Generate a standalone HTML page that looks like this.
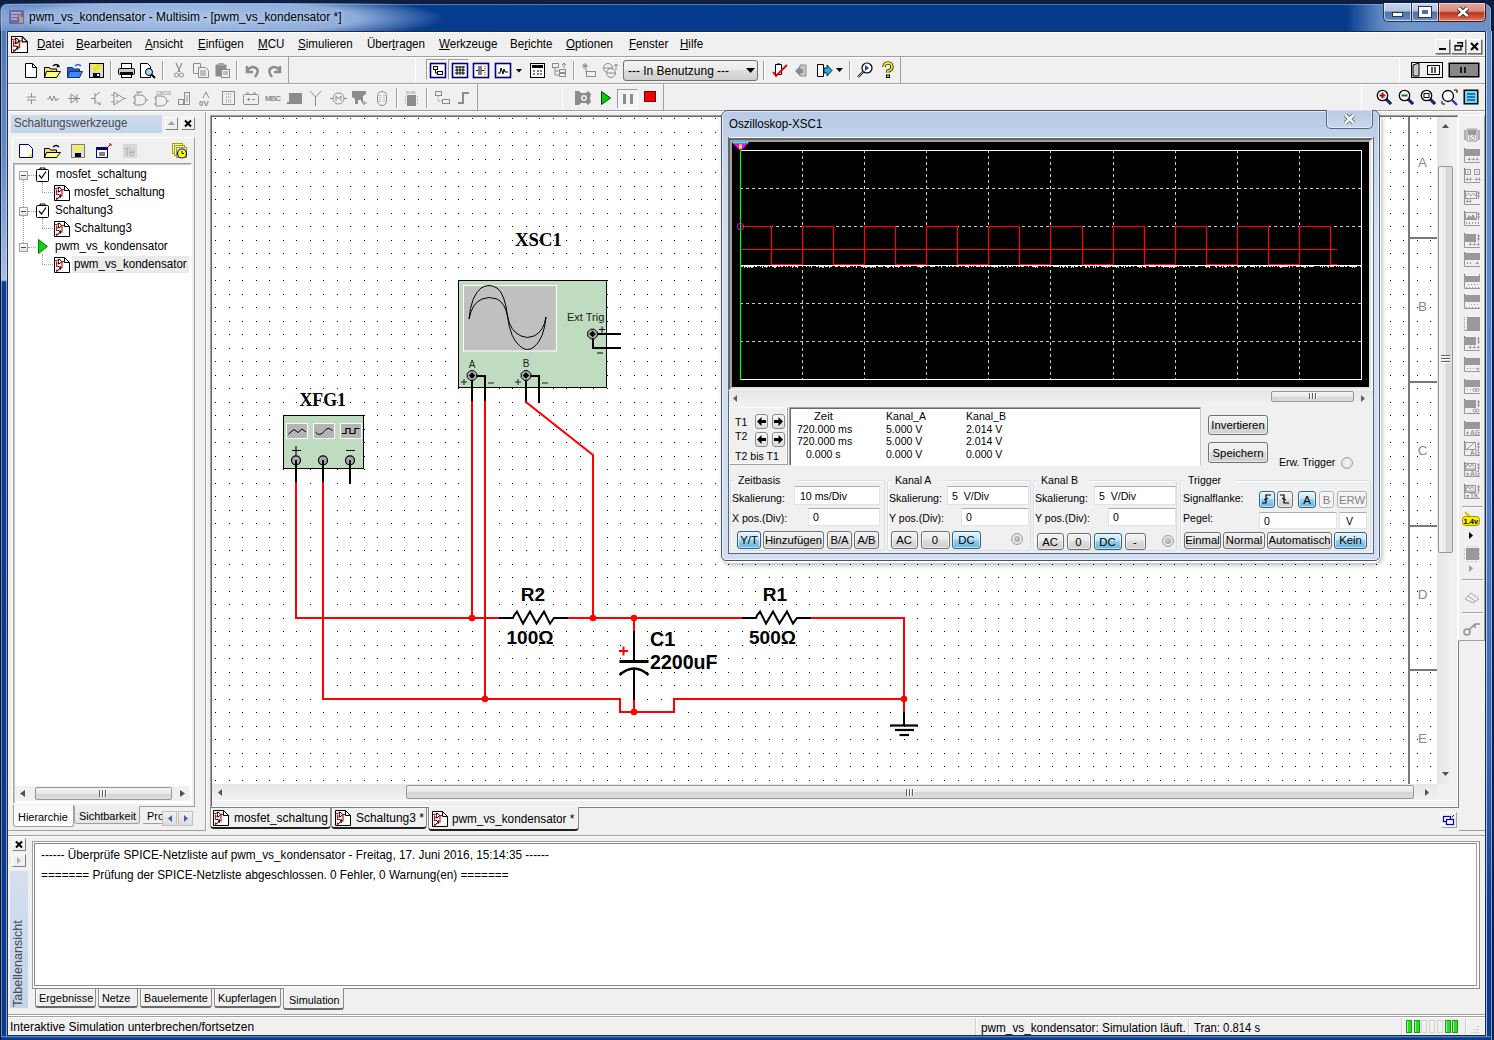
<!DOCTYPE html>
<html><head><meta charset="utf-8"><title>Multisim</title>
<style>
*{box-sizing:border-box;margin:0;padding:0}
html,body{width:1494px;height:1040px;overflow:hidden;background:#0c2250;font-family:"Liberation Sans",sans-serif;font-size:12px;color:#000}
.a{position:absolute}
svg.a{overflow:visible}
.t{position:absolute;white-space:pre;line-height:1}
.u{text-decoration:underline}
</style></head><body>
<div class="a" style="left:0px;top:0px;width:1494px;height:1040px;background:#0d1f45"></div>
<div class="a" style="left:0px;top:3px;width:1492px;height:1037px;border-radius:7px 7px 0 0;border:1px solid #0b1630;border-bottom:none;background:linear-gradient(90deg,#5f86c2 0px,#2d5aa2 40px,#063c8e 300px,#053a8b 900px,#053a8b 1345px,#5a84c0 1378px,#7096cc 1400px,#6a90c8 1492px)"></div>
<div class="a" style="left:1px;top:4px;width:1490px;height:1036px;border-radius:6px 6px 0 0;border:1px solid rgba(180,205,240,.45);border-bottom:none"></div>
<div class="a" style="left:0px;top:3px;width:620px;height:28px;border-radius:7px 0 0 0;background:radial-gradient(ellipse 250px 26px at 195px 15px,rgba(175,200,235,.95) 0%,rgba(165,192,232,.85) 65%,rgba(150,180,225,.0) 100%)"></div>
<div class="a" style="left:1px;top:31px;width:6px;height:1009px;background:linear-gradient(#5078b8 0px,#6088c4 120px,#a9c0e0 249px,#0c3c92 251px,#0a3a8c 1009px)"></div>
<div class="a" style="left:6px;top:31px;width:1px;height:1009px;background:rgba(210,225,245,.6)"></div>
<div class="a" style="left:1px;top:31px;width:1px;height:1009px;background:rgba(200,220,250,.5)"></div>
<div class="a" style="left:1485px;top:31px;width:7px;height:1009px;background:linear-gradient(#6a90c8 0%,#5580c4 45%,#3a68b4 70%,#0d3c90 88%,#0a3a8c 100%);border-left:1px solid #1b2d4d;box-shadow:inset 1px 0 0 rgba(200,220,250,.8),inset -1px 0 0 rgba(200,220,250,.6)"></div>
<svg class="a" style="left:9px;top:10px;" width="15" height="14" viewBox="0 0 15 14"><rect x="0" y="0" width="15" height="14" rx="1" fill="#6a6aa8"/><path d="M2 3H12M2 6H9M2 9H8" stroke="#f0e8d0" stroke-width="1.2"/><path d="M11 5V13M13 7V13" stroke="#f0c060" stroke-width="1.2"/></svg>
<div class="t" style="left:29px;top:11.00px;font-size:12.80px;color:#000;transform:scaleX(0.935);transform-origin:0 0;text-shadow:0 0 6px rgba(230,240,255,.9)">pwm_vs_kondensator - Multisim - [pwm_vs_kondensator *]</div>
<div class="a" style="left:1383px;top:3px;width:28px;height:19px;border:1px solid #27364f;border-top:none;border-right:none;border-radius:0 0 0 5px;background:linear-gradient(#c9d6ea 0%,#b0c3df 45%,#4e72a8 50%,#5f83ba 85%,#8aa8d4 100%);box-shadow:inset 0 0 0 1px rgba(255,255,255,.55)"></div>
<div class="a" style="left:1392px;top:12px;width:11px;height:5px;background:#fff;border:1px solid #2b3550"></div>
<div class="a" style="left:1411px;top:3px;width:27px;height:19px;border:1px solid #27364f;border-top:none;border-right:none;background:linear-gradient(#c9d6ea 0%,#b0c3df 45%,#4e72a8 50%,#5f83ba 85%,#8aa8d4 100%);box-shadow:inset 0 0 0 1px rgba(255,255,255,.55)"></div>
<div class="a" style="left:1419px;top:7px;width:12px;height:10px;border:3px solid #fff;outline:1px solid #2b3550;background:#4e72a8"></div>
<div class="a" style="left:1438px;top:3px;width:48px;height:19px;border:1px solid #4a1410;border-top:none;border-radius:0 0 5px 0;background:linear-gradient(#e3a9a0 0%,#d68a7c 45%,#c03018 55%,#d06048 85%,#e09080 100%);box-shadow:inset 0 0 0 1px rgba(255,255,255,.45)"></div>
<svg class="a" style="left:1456px;top:6px;" width="14" height="12" viewBox="0 0 14 12"><path d="M2.5 2L11.5 10M11.5 2L2.5 10" stroke="#3a2a2a" stroke-width="4.4"/><path d="M2.5 2L11.5 10M11.5 2L2.5 10" stroke="#fff" stroke-width="2.6"/></svg>
<div class="a" style="left:1px;top:1036px;width:1490px;height:4px;background:linear-gradient(#7a9cd0 0px,#3a68b0 1px,#0a3a8c 2px)"></div>
<div class="a" style="left:7px;top:31px;width:1479px;height:1005px;background:#f0f0f0;border:1px solid #1b2d4d"></div>
<div class="a" style="left:8px;top:32px;width:1477px;height:1px;background:#fff"></div>
<svg class="a" style="left:11px;top:36px;" width="17" height="17" viewBox="0 0 16 16"><path d="M0.5 0.5H10.5L15.5 5.5V15.5H0.5Z" fill="#fff" stroke="#000"/><path d="M10.5 0.5V5.5H15.5" fill="none" stroke="#000"/><path d="M1 3.5H3.5M2.5 4.5V9.5H4M10 4.5H8V11H6.5M2.5 12.5V15" fill="none" stroke="#f00000" stroke-width="1.2"/><path d="M4 2.2Q6.5 2 7.5 4.5Q6.5 7 4 7Q5.2 4.5 4 2.2Z" fill="#fff" stroke="#000" stroke-width="1"/><path d="M4 9L6.3 11L4 13.5M6.3 9.2V12.8M3 14.2L4.5 12.8" fill="none" stroke="#000" stroke-width="1"/></svg>
<div class="t" style="left:36.5px;top:38.00px;font-size:12.40px;color:#000;transform:scaleX(0.935);transform-origin:0 0;"><u>D</u>atei</div>
<div class="t" style="left:76px;top:38.00px;font-size:12.40px;color:#000;transform:scaleX(0.935);transform-origin:0 0;"><u>B</u>earbeiten</div>
<div class="t" style="left:145px;top:38.00px;font-size:12.40px;color:#000;transform:scaleX(0.935);transform-origin:0 0;"><u>A</u>nsicht</div>
<div class="t" style="left:198.3px;top:38.00px;font-size:12.40px;color:#000;transform:scaleX(0.935);transform-origin:0 0;"><u>E</u>infügen</div>
<div class="t" style="left:258.4px;top:38.00px;font-size:12.40px;color:#000;transform:scaleX(0.935);transform-origin:0 0;"><u>M</u>CU</div>
<div class="t" style="left:297.7px;top:38.00px;font-size:12.40px;color:#000;transform:scaleX(0.935);transform-origin:0 0;"><u>S</u>imulieren</div>
<div class="t" style="left:367.3px;top:38.00px;font-size:12.40px;color:#000;transform:scaleX(0.935);transform-origin:0 0;">Über<u>t</u>ragen</div>
<div class="t" style="left:438.9px;top:38.00px;font-size:12.40px;color:#000;transform:scaleX(0.935);transform-origin:0 0;"><u>W</u>erkzeuge</div>
<div class="t" style="left:510.4px;top:38.00px;font-size:12.40px;color:#000;transform:scaleX(0.935);transform-origin:0 0;">Be<u>r</u>ichte</div>
<div class="t" style="left:566px;top:38.00px;font-size:12.40px;color:#000;transform:scaleX(0.935);transform-origin:0 0;"><u>O</u>ptionen</div>
<div class="t" style="left:629px;top:38.00px;font-size:12.40px;color:#000;transform:scaleX(0.935);transform-origin:0 0;"><u>F</u>enster</div>
<div class="t" style="left:680.4px;top:38.00px;font-size:12.40px;color:#000;transform:scaleX(0.935);transform-origin:0 0;"><u>H</u>ilfe</div>
<div class="a" style="left:1435px;top:39px;width:15px;height:15px;background:#f0f0f0;border:1px solid;border-color:#fff #707070 #707070 #fff;box-shadow:1px 1px 0 #a0a0a0"></div>
<div class="a" style="left:1451px;top:39px;width:15px;height:15px;background:#f0f0f0;border:1px solid;border-color:#fff #707070 #707070 #fff;box-shadow:1px 1px 0 #a0a0a0"></div>
<div class="a" style="left:1467px;top:39px;width:15px;height:15px;background:#f0f0f0;border:1px solid;border-color:#fff #707070 #707070 #fff;box-shadow:1px 1px 0 #a0a0a0"></div>
<div class="a" style="left:1439px;top:48px;width:7px;height:2px;background:#000"></div>
<svg class="a" style="left:1454px;top:41px;" width="10" height="10" viewBox="0 0 10 10"><path d="M3.5 1.5H8.5V5.5H6.5" fill="none" stroke="#000" stroke-width="1.2"/><rect x="3" y="1" width="6" height="1.5" fill="#000"/><rect x="1" y="4.5" width="6" height="4.5" fill="none" stroke="#000" stroke-width="1.2"/><rect x="1" y="4" width="6" height="1.5" fill="#000"/></svg>
<svg class="a" style="left:1470px;top:42px;" width="9" height="9" viewBox="0 0 9 9"><path d="M1 1L8 8M8 1L1 8" stroke="#000" stroke-width="2"/></svg>
<div class="a" style="left:8px;top:56px;width:1477px;height:1px;background:#a0a0a0"></div>
<div class="a" style="left:8px;top:57px;width:1477px;height:1px;background:#fff"></div>
<div class="a" style="left:8px;top:57px;width:281px;height:27px;border-right:1px solid #a0a0a0;border-bottom:1px solid #a0a0a0"></div>
<div class="a" style="left:415px;top:57px;width:486px;height:27px;border-left:1px solid #fff;border-right:1px solid #a0a0a0;border-bottom:1px solid #a0a0a0"></div>
<div class="a" style="left:1399px;top:57px;width:86px;height:27px;border-left:1px solid #fff;border-bottom:1px solid #a0a0a0"></div>
<div class="a" style="left:8px;top:83px;width:1477px;height:1px;background:#a0a0a0"></div>
<div class="a" style="left:8px;top:84px;width:1477px;height:1px;background:#fff"></div>
<div class="a" style="left:8px;top:84px;width:470px;height:27px;border-right:1px solid #a0a0a0"></div>
<div class="a" style="left:562px;top:84px;width:102px;height:27px;border-left:1px solid #fff;border-right:1px solid #a0a0a0"></div>
<div class="a" style="left:1361px;top:84px;width:124px;height:27px;border-left:1px solid #fff"></div>
<div class="a" style="left:8px;top:110px;width:1477px;height:1px;background:#a0a0a0"></div>
<div class="a" style="left:8px;top:111px;width:1477px;height:1px;background:#fff"></div>
<svg class="a" style="left:25px;top:63px;" width="12" height="15" viewBox="0 0 12 15"><path d="M0.5 0.5H7.5L11.5 4.5V14.5H0.5Z" fill="#fff" stroke="#000"/><path d="M7.5 0.5V4.5H11.5" fill="none" stroke="#000"/></svg>
<svg class="a" style="left:44px;top:63px;" width="17" height="15" viewBox="0 0 17 15"><path d="M0.5 4.5H5.5L6.5 6H12.5V14.5H0.5Z" fill="#f0e060" stroke="#000"/><path d="M2.5 8.5H16.5L12.5 14.5H0.5Z" fill="#ffff80" stroke="#000"/><path d="M9 3 Q12 0 15 3" fill="none" stroke="#000" stroke-width="1.5"/><path d="M13.5 1L16 4L12.5 4.5Z" fill="#000"/></svg>
<svg class="a" style="left:67px;top:63px;" width="16" height="15" viewBox="0 0 16 15"><path d="M0.5 4.5H5.5L6.5 6H12.5V14.5H0.5Z" fill="#2060d0" stroke="#103080"/><path d="M2.5 8.5H15.5L12.5 14.5H0.5Z" fill="#3a8af0" stroke="#103080"/><path d="M8 3 Q11 0 14 3" fill="none" stroke="#2060d0" stroke-width="1.5"/></svg>
<svg class="a" style="left:89px;top:63px;" width="15" height="15" viewBox="0 0 15 15"><rect x="0.5" y="0.5" width="14" height="14" fill="#d8d8d8" stroke="#000"/><rect x="3" y="1" width="9" height="7" fill="#f0f040"/><path d="M4 7L10 1M6 8L12 2" stroke="#c8c820"/><rect x="4" y="10" width="7" height="4" fill="#000"/><rect x="8" y="11" width="2" height="2" fill="#fff"/></svg>
<div class="a" style="left:110px;top:61px;width:1px;height:19px;background:#a0a0a0;box-shadow:1px 0 0 #fff"></div>
<svg class="a" style="left:118px;top:63px;" width="17" height="15" viewBox="0 0 17 15"><rect x="3.5" y="0.5" width="10" height="5" fill="#fff" stroke="#000"/><rect x="0.5" y="5.5" width="16" height="6" rx="1" fill="#c8c8c8" stroke="#000"/><rect x="2" y="9" width="13" height="2" fill="#000"/><rect x="3.5" y="11.5" width="10" height="3" fill="#fff" stroke="#000"/></svg>
<svg class="a" style="left:140px;top:63px;" width="16" height="16" viewBox="0 0 16 16"><path d="M0.5 0.5H7.5L10.5 3.5V14.5H0.5Z" fill="#fff" stroke="#000"/><circle cx="9" cy="9" r="3.5" fill="#a0e0f0" stroke="#000"/><path d="M11.5 11.5L15 15" stroke="#000" stroke-width="2"/></svg>
<div class="a" style="left:162px;top:61px;width:1px;height:19px;background:#a0a0a0;box-shadow:1px 0 0 #fff"></div>
<svg class="a" style="left:174px;top:63px;" width="10" height="15" viewBox="0 0 10 15"><path d="M2 0L6 9M8 0L4 9" stroke="#8c8c8c" stroke-width="1.2"/><circle cx="2.5" cy="12" r="2" fill="none" stroke="#8c8c8c"/><circle cx="7.5" cy="12" r="2" fill="none" stroke="#8c8c8c"/></svg>
<svg class="a" style="left:193px;top:63px;" width="16" height="15" viewBox="0 0 16 15"><path d="M0.5 0.5H7.5V10.5H0.5Z" fill="#f0f0f0" stroke="#8c8c8c"/><path d="M5.5 4.5H12.5L15.5 7.5V14.5H5.5Z" fill="#f0f0f0" stroke="#8c8c8c"/><path d="M7 8H13M7 10H13M7 12H13" stroke="#8c8c8c"/></svg>
<svg class="a" style="left:215px;top:63px;" width="15" height="15" viewBox="0 0 15 15"><rect x="0.5" y="1.5" width="11" height="12" rx="1" fill="#8c8c8c"/><rect x="3" y="0" width="6" height="3" fill="#a8a8a8"/><rect x="6.5" y="6.5" width="8" height="8" fill="#f0f0f0" stroke="#8c8c8c"/><path d="M8 9H13M8 11H13" stroke="#8c8c8c"/></svg>
<div class="a" style="left:236px;top:61px;width:1px;height:19px;background:#a0a0a0;box-shadow:1px 0 0 #fff"></div>
<svg class="a" style="left:244px;top:63px;" width="16" height="15" viewBox="0 0 16 15"><path d="M3 3 L3 9 L9 9" fill="none" stroke="#8c8c8c" stroke-width="2.5"/><path d="M3 8 Q8 1 13 6 Q15 9 11 14" fill="none" stroke="#8c8c8c" stroke-width="2.5"/></svg>
<svg class="a" style="left:267px;top:63px;" width="16" height="15" viewBox="0 0 16 15"><path d="M13 3 L13 9 L7 9" fill="none" stroke="#8c8c8c" stroke-width="2.5"/><path d="M13 8 Q8 1 3 6 Q1 9 5 14" fill="none" stroke="#8c8c8c" stroke-width="2.5"/></svg>
<div class="a" style="left:426px;top:59px;width:21px;height:21px;border:1px solid;border-color:#a0a0a0 #fff #fff #a0a0a0;background:#f4f4f4"></div>
<div class="a" style="left:448px;top:59px;width:21px;height:21px;border:1px solid;border-color:#a0a0a0 #fff #fff #a0a0a0;background:#f4f4f4"></div>
<svg class="a" style="left:430px;top:63px;" width="16" height="15" viewBox="0 0 16 15"><rect x="0.5" y="0.5" width="15" height="14" fill="#fff" stroke="#000080" stroke-width="1.6"/><rect x="3.5" y="3.5" width="4" height="3" fill="none" stroke="#000"/><rect x="7.5" y="8.5" width="5" height="3" fill="none" stroke="#000"/><path d="M5.5 6.5V10H7.5" stroke="#000" fill="none"/></svg>
<svg class="a" style="left:452px;top:63px;" width="16" height="15" viewBox="0 0 16 15"><rect x="0.5" y="0.5" width="15" height="14" fill="#fff" stroke="#000080" stroke-width="1.6"/><path d="M3 4H13M3 7H13M3 10H13M5 3V12M8 3V12M11 3V12" stroke="#000"/></svg>
<svg class="a" style="left:473px;top:63px;" width="16" height="15" viewBox="0 0 16 15"><rect x="0.5" y="0.5" width="15" height="14" fill="#fff" stroke="#000080" stroke-width="1.6"/><path d="M3 7.5H5M6 3V12M8 3V12M9 7.5H11" stroke="#000"/><path d="M12 3V12" stroke="#e00000" stroke-dasharray="1 1"/></svg>
<svg class="a" style="left:495px;top:63px;" width="16" height="15" viewBox="0 0 16 15"><rect x="0.5" y="0.5" width="15" height="14" fill="#fff" stroke="#000080" stroke-width="1.6"/><path d="M3 10L5 10L6 5L8 11L9 6L10 9L13 9" stroke="#000" fill="none"/></svg>
<svg class="a" style="left:516px;top:69px;" width="6" height="4" viewBox="0 0 6 4"><path d="M0 0H6L3 3.5Z" fill="#000"/></svg>
<svg class="a" style="left:530px;top:63px;" width="15" height="15" viewBox="0 0 15 15"><rect x="0.5" y="0.5" width="14" height="14" fill="#fff" stroke="#000"/><rect x="2" y="2" width="11" height="3" fill="#000"/><path d="M3 8H5M7 8H9M10 8H12M3 11H5M7 11H9M10 11H12" stroke="#000"/></svg>
<svg class="a" style="left:552px;top:63px;" width="15" height="15" viewBox="0 0 15 15"><rect x="0.5" y="0.5" width="6" height="4" fill="none" stroke="#8c8c8c"/><path d="M3 5V12H7M3 8H7" stroke="#8c8c8c" fill="none"/><rect x="7.5" y="6.5" width="6" height="3" fill="none" stroke="#8c8c8c"/><rect x="7.5" y="10.5" width="6" height="3" fill="none" stroke="#8c8c8c"/><path d="M12 0V5M10 2L12 0L14 2" stroke="#8c8c8c" fill="none"/></svg>
<div class="a" style="left:573px;top:61px;width:1px;height:19px;background:#a0a0a0;box-shadow:1px 0 0 #fff"></div>
<svg class="a" style="left:581px;top:63px;" width="16" height="15" viewBox="0 0 16 15"><path d="M1 3L7 3M4 0L4 6M2 1L6 5M6 1L2 5" stroke="#8c8c8c"/><rect x="5.5" y="8.5" width="9" height="5" fill="none" stroke="#8c8c8c"/><path d="M5 6V9" stroke="#8c8c8c"/></svg>
<svg class="a" style="left:603px;top:63px;" width="16" height="15" viewBox="0 0 16 15"><circle cx="5" cy="5" r="4.5" fill="none" stroke="#8c8c8c"/><circle cx="8" cy="10" r="4.5" fill="#f0f0f0" stroke="#8c8c8c"/><path d="M1 5H9M4 10H12" stroke="#8c8c8c"/><path d="M13 1V7M11 3L13 1L15 3" stroke="#8c8c8c" fill="none"/></svg>
<div class="a" style="left:623px;top:60px;width:135px;height:21px;border:1px solid #707070;border-radius:3px;background:linear-gradient(#f2f2f2 0%,#ebebeb 45%,#dddddd 50%,#cfcfcf 100%)"></div>
<div class="t" style="left:627.5px;top:65.00px;font-size:12.80px;color:#000;transform:scaleX(0.935);transform-origin:0 0;">--- In Benutzung ---</div>
<svg class="a" style="left:746px;top:68px;" width="9" height="5" viewBox="0 0 9 5"><path d="M0 0H9L4.5 5Z" fill="#000"/></svg>
<div class="a" style="left:763px;top:61px;width:1px;height:19px;background:#a0a0a0;box-shadow:1px 0 0 #fff"></div>
<svg class="a" style="left:772px;top:63px;" width="16" height="16" viewBox="0 0 16 16"><path d="M3.5 1.5H9.5V11.5H3.5Z" fill="#fff" stroke="#000"/><path d="M5 2V1H8V2" stroke="#000" fill="none"/><path d="M1 9L4 13L15 2" stroke="#e00000" stroke-width="1.8" fill="none"/></svg>
<svg class="a" style="left:795px;top:64px;" width="12" height="13" viewBox="0 0 12 13"><path d="M5 1H11V12H5Z" fill="#c8c8c8" stroke="#8c8c8c"/><path d="M0 7L5 2V5H8V9H5V12Z" fill="#8c8c8c"/></svg>
<svg class="a" style="left:817px;top:63px;" width="15" height="15" viewBox="0 0 15 15"><path d="M0.5 1.5H6.5V13.5H0.5Z" fill="#fff" stroke="#000"/><path d="M7 5H10V2L15 7.5L10 13V10H7Z" fill="#20b0e0" stroke="#000" stroke-width=".8"/></svg>
<svg class="a" style="left:836px;top:68px;" width="7" height="4" viewBox="0 0 7 4"><path d="M0 0H7L3.5 4Z" fill="#000"/></svg>
<div class="a" style="left:849px;top:61px;width:1px;height:19px;background:#a0a0a0;box-shadow:1px 0 0 #fff"></div>
<svg class="a" style="left:857px;top:62px;" width="16" height="17" viewBox="0 0 16 17"><circle cx="10" cy="6" r="5" fill="#fff" stroke="#000" stroke-width="1.2"/><path d="M8 3L12 6L8 9" fill="#2040c0"/><path d="M6.5 9.5L1 15" stroke="#000" stroke-width="2.2"/><path d="M6.5 9.5L1 15" stroke="#fff" stroke-width=".8"/></svg>
<svg class="a" style="left:882px;top:62px;" width="12" height="17" viewBox="0 0 12 17"><path d="M2 5 Q2 1 6 1 Q10 1 10 5 Q10 8 6 9 V11" fill="none" stroke="#000" stroke-width="3.2"/><path d="M2 5 Q2 1 6 1 Q10 1 10 5 Q10 8 6 9 V11" fill="none" stroke="#f0f000" stroke-width="1.8"/><rect x="4" y="12.5" width="4" height="3.5" fill="#000"/><rect x="5" y="13.5" width="2" height="1.5" fill="#f0f000"/></svg>
<svg class="a" style="left:26px;top:91px;" width="11" height="15" viewBox="0 0 11 15"><path d="M5.5 2V6M1 6H10M1 9H10M5.5 9V13" stroke="#8c8c8c" fill="none"/></svg>
<svg class="a" style="left:47px;top:91px;" width="12" height="15" viewBox="0 0 12 15"><path d="M0 8H2L3 5L5 10L7 5L9 10L10 8H12" stroke="#8c8c8c" fill="none"/></svg>
<svg class="a" style="left:68px;top:91px;" width="12" height="15" viewBox="0 0 12 15"><path d="M0 7.5H12M3 3V12M3 3L9 7.5L3 12M9 3V12" stroke="#8c8c8c" fill="none"/></svg>
<svg class="a" style="left:91px;top:91px;" width="12" height="15" viewBox="0 0 12 15"><path d="M4 2V13M0 7.5H4M4 5L9 1M4 10L9 14M7 12L9 14L9 11" stroke="#8c8c8c" fill="none"/></svg>
<svg class="a" style="left:111px;top:91px;" width="15" height="15" viewBox="0 0 15 15"><path d="M3 1V14L13 7.5Z" stroke="#8c8c8c" fill="none"/><path d="M0 4H3M0 11H3M13 7.5H15M5 5H7M6 4V6M5 10H7" stroke="#8c8c8c" fill="none"/></svg>
<svg class="a" style="left:133px;top:91px;" width="15" height="15" viewBox="0 0 15 15"><path d="M2 4H7Q12 4 13 9Q12 14 7 14H2Z" stroke="#8c8c8c" fill="none"/><path d="M0 6H2M0 12H2M13 9H15M3 1H9M5 1V3" stroke="#8c8c8c" fill="none"/></svg>
<svg class="a" style="left:154px;top:91px;" width="17" height="15" viewBox="0 0 17 15"><path d="M2 5H7Q12 5 13 10Q12 15 7 15H2Z" stroke="#8c8c8c" fill="none"/><path d="M0 7H2M0 13H2M13 10H15" stroke="#8c8c8c" fill="none"/><text x="2" y="4" font-size="5" fill="#8c8c8c" font-family="Liberation Sans">CMOS</text></svg>
<svg class="a" style="left:178px;top:91px;" width="13" height="15" viewBox="0 0 13 15"><rect x="6.5" y="1.5" width="5" height="12" stroke="#8c8c8c" fill="none"/><rect x="0.5" y="8.5" width="5" height="5" stroke="#8c8c8c" fill="none"/><path d="M9 4V11" stroke="#8c8c8c" fill="none"/></svg>
<svg class="a" style="left:199px;top:91px;" width="16" height="15" viewBox="0 0 16 15"><path d="M4 7L7 1L10 7" stroke="#8c8c8c" fill="none"/><text x="0" y="15" font-size="8" font-weight="bold" fill="#8c8c8c" font-family="Liberation Sans">0V</text></svg>
<svg class="a" style="left:222px;top:91px;" width="13" height="14" viewBox="0 0 13 14"><rect x="0.5" y="0.5" width="12" height="13" stroke="#8c8c8c" fill="none"/><path d="M4 3H9M4 6H9M4 9H9M4 11H9" stroke="#8c8c8c" stroke-dasharray="1 1"/></svg>
<svg class="a" style="left:243px;top:92px;" width="16" height="13" viewBox="0 0 16 13"><rect x="0.5" y="2.5" width="15" height="10" rx="1" stroke="#8c8c8c" fill="none"/><path d="M3 1H6M10 1H13M4 7.5H7M5.5 6V9M9 7.5H12" stroke="#8c8c8c" fill="none"/></svg>
<svg class="a" style="left:265px;top:94px;" width="16" height="8" viewBox="0 0 16 8"><text x="0" y="7" font-size="7.5" font-weight="bold" fill="#8c8c8c" font-family="Liberation Sans" textLength="16">MISC</text></svg>
<svg class="a" style="left:287px;top:93px;" width="15" height="12" viewBox="0 0 15 12"><rect x="2" y="0" width="13" height="9" fill="#8c8c8c"/><path d="M0 10H15" stroke="#8c8c8c" stroke-width="2"/></svg>
<svg class="a" style="left:310px;top:91px;" width="11" height="15" viewBox="0 0 11 15"><path d="M5.5 5V15M0 0L5.5 6L11 0" stroke="#8c8c8c" fill="none"/></svg>
<svg class="a" style="left:330px;top:91px;" width="17" height="15" viewBox="0 0 17 15"><circle cx="8.5" cy="7.5" r="5.5" stroke="#8c8c8c" fill="none"/><path d="M0 7.5H3M14 7.5H17M6 10V5L8.5 8L11 5V10" stroke="#8c8c8c" fill="none"/></svg>
<svg class="a" style="left:352px;top:91px;" width="16" height="15" viewBox="0 0 16 15"><path d="M0 0H14V3L11 5V11H9V9H6V13H3V8L0 6Z" fill="#8c8c8c"/><path d="M10 12H15M12 10V14" stroke="#8c8c8c" fill="none"/></svg>
<svg class="a" style="left:377px;top:91px;" width="10" height="15" viewBox="0 0 10 15"><rect x="0.5" y="0.5" width="9" height="14" rx="4.5" stroke="#8c8c8c" fill="none"/><path d="M3 4V11M7 4V11" stroke="#8c8c8c" stroke-dasharray="1 1"/></svg>
<div class="a" style="left:396px;top:88px;width:1px;height:20px;background:#a0a0a0;box-shadow:1px 0 0 #fff"></div>
<svg class="a" style="left:405px;top:91px;" width="13" height="15" viewBox="0 0 13 15"><rect x="2" y="4" width="9" height="11" fill="#8c8c8c"/><path d="M0 6H13M0 9H13M0 12H13" stroke="#8c8c8c" stroke-dasharray="1 1"/><text x="1" y="3" font-size="4" fill="#8c8c8c">ROM</text></svg>
<div class="a" style="left:426px;top:88px;width:1px;height:20px;background:#a0a0a0;box-shadow:1px 0 0 #fff"></div>
<svg class="a" style="left:435px;top:91px;" width="15" height="14" viewBox="0 0 15 14"><rect x="0.5" y="0.5" width="6" height="4" stroke="#8c8c8c" fill="none"/><rect x="7.5" y="8.5" width="7" height="4" stroke="#8c8c8c" fill="none"/><path d="M3 5V10H7" stroke="#8c8c8c" stroke-dasharray="1 1" fill="none"/></svg>
<svg class="a" style="left:458px;top:91px;" width="12" height="14" viewBox="0 0 12 14"><path d="M0 12H5V2H11" stroke="#8c8c8c" stroke-width="2" fill="none"/></svg>
<svg class="a" style="left:575px;top:90px;" width="17" height="16" viewBox="0 0 17 16"><path d="M0 1H4L6 3 H11L13 1L16 4L15 8L16 12L13 15L11 13H6L4 15H0Z" fill="#8c8c8c"/><circle cx="9" cy="8" r="3" fill="#f0f0f0"/><circle cx="9" cy="8" r="1.5" fill="#8c8c8c"/></svg>
<svg class="a" style="left:601px;top:91px;" width="10" height="14" viewBox="0 0 10 14"><path d="M0.5 0.5L9.5 7L0.5 13.5Z" fill="#00d000" stroke="#004000"/></svg>
<div class="a" style="left:617px;top:89px;width:21px;height:20px;border:1px solid;border-color:#a0a0a0 #fff #fff #a0a0a0;background:#f4f4f4"></div>
<div class="a" style="left:623px;top:94px;width:3px;height:10px;background:#8c8c8c"></div>
<div class="a" style="left:630px;top:94px;width:3px;height:10px;background:#8c8c8c"></div>
<div class="a" style="left:644px;top:91px;width:12px;height:11px;background:#f00000;border:1px solid #800000"></div>
<svg class="a" style="left:1376px;top:89px;" width="16" height="16" viewBox="0 0 16 16"><circle cx="6.5" cy="6.5" r="5.2" fill="#fff" stroke="#000" stroke-width="1.3"/><path d="M3.5 6.5H9.5M6.5 3.5V9.5" stroke="#c00000" stroke-width="2"/><path d="M10 10L15 15" stroke="#000" stroke-width="3"/><path d="M10.5 10.5L14.5 14.5" stroke="#2030c0" stroke-width="1.6"/></svg>
<svg class="a" style="left:1398px;top:89px;" width="16" height="16" viewBox="0 0 16 16"><circle cx="6.5" cy="6.5" r="5.2" fill="#fff" stroke="#000" stroke-width="1.3"/><path d="M3.5 6.5H9.5" stroke="#008000" stroke-width="2"/><path d="M10 10L15 15" stroke="#000" stroke-width="3"/><path d="M10.5 10.5L14.5 14.5" stroke="#2030c0" stroke-width="1.6"/></svg>
<svg class="a" style="left:1420px;top:89px;" width="16" height="16" viewBox="0 0 16 16"><circle cx="6.5" cy="6.5" r="5.2" fill="#fff" stroke="#000" stroke-width="1.3"/><rect x="4" y="4.5" width="5" height="4" fill="none" stroke="#000"/><path d="M10 10L15 15" stroke="#000" stroke-width="3"/><path d="M10.5 10.5L14.5 14.5" stroke="#2030c0" stroke-width="1.6"/></svg>
<svg class="a" style="left:1441px;top:89px;" width="17" height="16" viewBox="0 0 17 16"><circle cx="7" cy="7" r="5.5" fill="#fff" stroke="#000" stroke-width="1.3"/><path d="M1 12V15H4M13 1H16V4" stroke="#000" fill="none"/><path d="M11 11L16 16" stroke="#2030c0" stroke-width="2.2"/></svg>
<svg class="a" style="left:1463px;top:89px;" width="16" height="16" viewBox="0 0 16 16"><rect x="0.5" y="0.5" width="15" height="15" fill="#000"/><rect x="2" y="2" width="12" height="12" fill="#60e0f0"/><path d="M4 5H12M4 8H12M4 11H12" stroke="#000080"/></svg>
<svg class="a" style="left:1411px;top:62px;" width="32" height="16" viewBox="0 0 32 16"><rect x="0.5" y="0.5" width="31" height="15" fill="#f0f0f0" stroke="#000"/><path d="M2 14V3L8 1V14Z" fill="#c8c8c8" stroke="#000"/><rect x="16.5" y="3.5" width="12" height="9" fill="#fff" stroke="#000"/><path d="M21 5V11M24 5V11" stroke="#000" stroke-width="1.3"/></svg>
<svg class="a" style="left:1448px;top:62px;" width="32" height="16" viewBox="0 0 32 16"><rect x="0.5" y="0.5" width="31" height="15" fill="#000"/><rect x="2" y="2" width="28" height="12" fill="#888"/><path d="M13 5V11M17 5V11" stroke="#000" stroke-width="1.6"/></svg>
<div class="a" style="left:11px;top:115px;width:151px;height:18px;background:linear-gradient(#cfdcee,#c2d4ea)"></div>
<div class="t" style="left:14px;top:117.00px;font-size:12.40px;color:#4a4a4a;transform:scaleX(0.935);transform-origin:0 0;">Schaltungswerkzeuge</div>
<div class="a" style="left:165px;top:117px;width:13px;height:13px;background:#f0f0f0;border:1px solid;border-color:#fff #808080 #808080 #fff"></div>
<svg class="a" style="left:168px;top:121px;" width="7" height="4" viewBox="0 0 7 4"><path d="M0 4L3.5 0L7 4Z" fill="#a0a0a0"/></svg>
<div class="a" style="left:181px;top:117px;width:14px;height:13px;background:#f0f0f0;border:1px solid;border-color:#fff #808080 #808080 #fff"></div>
<svg class="a" style="left:184px;top:120px;" width="8" height="7" viewBox="0 0 8 7"><path d="M1 0.5L7 6.5M7 0.5L1 6.5" stroke="#000" stroke-width="2"/></svg>
<div class="a" style="left:12px;top:137px;width:183px;height:670px;border:1px solid;border-color:#fff #a0a0a0 #a0a0a0 #fff"></div>
<div class="a" style="left:13px;top:137px;width:181px;height:1px;background:#fff"></div>
<svg class="a" style="left:19px;top:144px;" width="14" height="14" viewBox="0 0 14 14"><path d="M0.5 0.5H9.5L13.5 4.5V13.5H0.5Z" fill="#fff" stroke="#000080"/><path d="M9 13L13 9V13Z" fill="#f0f000"/></svg>
<svg class="a" style="left:44px;top:144px;" width="17" height="14" viewBox="0 0 17 14"><path d="M0.5 4.5H5.5L6.5 6H12.5V13.5H0.5Z" fill="#f0e060" stroke="#000"/><path d="M2.5 8.5H16.5L12.5 13.5H0.5Z" fill="#ffff80" stroke="#000"/><path d="M9 3 Q12 0 15 3" fill="none" stroke="#000" stroke-width="1.4"/></svg>
<svg class="a" style="left:71px;top:144px;" width="14" height="14" viewBox="0 0 14 14"><rect x="0.5" y="0.5" width="13" height="13" fill="#e0e0e0" stroke="#808080"/><rect x="2" y="1" width="10" height="6" fill="#f0f060"/><rect x="4" y="9" width="6" height="4" fill="#000"/></svg>
<svg class="a" style="left:96px;top:143px;" width="16" height="15" viewBox="0 0 16 15"><rect x="0.5" y="4.5" width="11" height="10" fill="#fff" stroke="#000080"/><rect x="1" y="5" width="10" height="2" fill="#000080"/><path d="M3 10H9M3 12H9" stroke="#000"/><path d="M12 4L15 1M13 1H15V3" stroke="#c00000" fill="none"/></svg>
<svg class="a" style="left:123px;top:144px;" width="14" height="14" viewBox="0 0 14 14"><rect x="0" y="0" width="14" height="14" fill="#d8d8d8"/><text x="1" y="12" font-size="10" fill="#a8a8a8" font-family="Liberation Sans">Te</text></svg>
<svg class="a" style="left:172px;top:143px;" width="16" height="16" viewBox="0 0 16 16"><rect x="0.5" y="0.5" width="10" height="10" fill="#f0f0c0" stroke="#a0a000"/><rect x="2.5" y="2.5" width="10" height="10" fill="#f0f0c0" stroke="#a0a000"/><rect x="4.5" y="4.5" width="10" height="10" fill="#f0f0c0" stroke="#a0a000"/><circle cx="10" cy="10.5" r="4.5" fill="#ffff00" stroke="#0000c0" stroke-width="1.2"/><path d="M10 8V10.5H12" stroke="#000" fill="none"/></svg>
<div class="a" style="left:13px;top:163px;width:179px;height:641px;background:#fff;border:1px solid;border-color:#a0a0a0 #fff #fff #a0a0a0;box-shadow:inset 1px 1px 0 #c8c8c8"></div>
<div class="a" style="left:23px;top:180px;width:1px;height:67px;border-left:1px dotted #a0a0a0"></div>
<div class="a" style="left:28px;top:175px;width:8px;height:1px;border-top:1px dotted #a0a0a0"></div>
<div class="a" style="left:28px;top:211px;width:8px;height:1px;border-top:1px dotted #a0a0a0"></div>
<div class="a" style="left:28px;top:247px;width:8px;height:1px;border-top:1px dotted #a0a0a0"></div>
<div class="a" style="left:42px;top:182px;width:1px;height:10px;border-left:1px dotted #a0a0a0"></div>
<div class="a" style="left:42px;top:192px;width:11px;height:1px;border-top:1px dotted #a0a0a0"></div>
<div class="a" style="left:42px;top:218px;width:1px;height:10px;border-left:1px dotted #a0a0a0"></div>
<div class="a" style="left:42px;top:228px;width:11px;height:1px;border-top:1px dotted #a0a0a0"></div>
<div class="a" style="left:42px;top:254px;width:1px;height:10px;border-left:1px dotted #a0a0a0"></div>
<div class="a" style="left:42px;top:264px;width:11px;height:1px;border-top:1px dotted #a0a0a0"></div>
<div class="a" style="left:19px;top:171px;width:9px;height:9px;border:1px solid #a0a0a0;background:linear-gradient(#fff,#e0e0e0)"></div>
<div class="a" style="left:21px;top:175px;width:5px;height:1px;background:#3050a0"></div>
<div class="a" style="left:19px;top:207px;width:9px;height:9px;border:1px solid #a0a0a0;background:linear-gradient(#fff,#e0e0e0)"></div>
<div class="a" style="left:21px;top:211px;width:5px;height:1px;background:#3050a0"></div>
<div class="a" style="left:19px;top:243px;width:9px;height:9px;border:1px solid #a0a0a0;background:linear-gradient(#fff,#e0e0e0)"></div>
<div class="a" style="left:21px;top:247px;width:5px;height:1px;background:#3050a0"></div>
<svg class="a" style="left:36px;top:167px;" width="13" height="15" viewBox="0 0 13 15"><rect x="0.5" y="2.5" width="12" height="12" rx="1" fill="#fff" stroke="#000"/><path d="M4 2.5V1H9V2.5" fill="none" stroke="#000"/><path d="M3 8L5.5 11L10 4.5" fill="none" stroke="#000" stroke-width="1.2"/></svg>
<svg class="a" style="left:36px;top:203px;" width="13" height="15" viewBox="0 0 13 15"><rect x="0.5" y="2.5" width="12" height="12" rx="1" fill="#fff" stroke="#000"/><path d="M4 2.5V1H9V2.5" fill="none" stroke="#000"/><path d="M3 8L5.5 11L10 4.5" fill="none" stroke="#000" stroke-width="1.2"/></svg>
<svg class="a" style="left:38px;top:239px;" width="10" height="15" viewBox="0 0 10 15"><path d="M0.5 0.5L9.5 7.5L0.5 14.5Z" fill="#10d010" stroke="#008000"/></svg>
<svg class="a" style="left:54px;top:185px;" width="16" height="16" viewBox="0 0 16 16"><path d="M0.5 0.5H10.5L15.5 5.5V15.5H0.5Z" fill="#fff" stroke="#000"/><path d="M10.5 0.5V5.5H15.5" fill="none" stroke="#000"/><path d="M1 3.5H3.5M2.5 4.5V9.5H4M10 4.5H8V11H6.5M2.5 12.5V15" fill="none" stroke="#f00000" stroke-width="1.2"/><path d="M4 2.2Q6.5 2 7.5 4.5Q6.5 7 4 7Q5.2 4.5 4 2.2Z" fill="#fff" stroke="#000" stroke-width="1"/><path d="M4 9L6.3 11L4 13.5M6.3 9.2V12.8M3 14.2L4.5 12.8" fill="none" stroke="#000" stroke-width="1"/></svg>
<svg class="a" style="left:54px;top:221px;" width="16" height="16" viewBox="0 0 16 16"><path d="M0.5 0.5H10.5L15.5 5.5V15.5H0.5Z" fill="#fff" stroke="#000"/><path d="M10.5 0.5V5.5H15.5" fill="none" stroke="#000"/><path d="M1 3.5H3.5M2.5 4.5V9.5H4M10 4.5H8V11H6.5M2.5 12.5V15" fill="none" stroke="#f00000" stroke-width="1.2"/><path d="M4 2.2Q6.5 2 7.5 4.5Q6.5 7 4 7Q5.2 4.5 4 2.2Z" fill="#fff" stroke="#000" stroke-width="1"/><path d="M4 9L6.3 11L4 13.5M6.3 9.2V12.8M3 14.2L4.5 12.8" fill="none" stroke="#000" stroke-width="1"/></svg>
<svg class="a" style="left:54px;top:257px;" width="16" height="16" viewBox="0 0 16 16"><path d="M0.5 0.5H10.5L15.5 5.5V15.5H0.5Z" fill="#fff" stroke="#000"/><path d="M10.5 0.5V5.5H15.5" fill="none" stroke="#000"/><path d="M1 3.5H3.5M2.5 4.5V9.5H4M10 4.5H8V11H6.5M2.5 12.5V15" fill="none" stroke="#f00000" stroke-width="1.2"/><path d="M4 2.2Q6.5 2 7.5 4.5Q6.5 7 4 7Q5.2 4.5 4 2.2Z" fill="#fff" stroke="#000" stroke-width="1"/><path d="M4 9L6.3 11L4 13.5M6.3 9.2V12.8M3 14.2L4.5 12.8" fill="none" stroke="#000" stroke-width="1"/></svg>
<div class="a" style="left:72px;top:256px;width:117px;height:17px;background:#ebebeb"></div>
<div class="t" style="left:55.8px;top:168.00px;font-size:12.40px;color:#000;transform:scaleX(0.935);transform-origin:0 0;">mosfet_schaltung</div>
<div class="t" style="left:74.4px;top:186.00px;font-size:12.40px;color:#000;transform:scaleX(0.935);transform-origin:0 0;">mosfet_schaltung</div>
<div class="t" style="left:55px;top:204.00px;font-size:12.40px;color:#000;transform:scaleX(0.935);transform-origin:0 0;">Schaltung3</div>
<div class="t" style="left:74px;top:222.00px;font-size:12.40px;color:#000;transform:scaleX(0.935);transform-origin:0 0;">Schaltung3</div>
<div class="t" style="left:55px;top:240.00px;font-size:12.40px;color:#000;transform:scaleX(0.935);transform-origin:0 0;">pwm_vs_kondensator</div>
<div class="t" style="left:74px;top:258.00px;font-size:12.40px;color:#000;transform:scaleX(0.935);transform-origin:0 0;">pwm_vs_kondensator</div>
<div class="a" style="left:15px;top:786px;width:175px;height:15px;background:#f0f0f0"></div>
<svg class="a" style="left:20px;top:790px;" width="5" height="7" viewBox="0 0 5 7"><path d="M5 0V7L0 3.5Z" fill="#505050"/></svg>
<svg class="a" style="left:180px;top:790px;" width="5" height="7" viewBox="0 0 5 7"><path d="M0 0V7L5 3.5Z" fill="#505050"/></svg>
<div class="a" style="left:15px;top:786px;width:0px;height:15px;background:#f0f0f0;background:linear-gradient(#e8e8e8,#f4f4f4)"></div>
<div class="a" style="left:35px;top:787px;width:137px;height:13px;border:1px solid #979797;border-radius:2px;background:linear-gradient(#f4f4f4 0%,#e8e8e8 50%,#d4d4d4 51%,#dcdcdc 100%)"></div>
<div class="a" style="left:99px;top:790px;width:1px;height:7px;background:#606060;box-shadow:1px 0 0 #fff"></div>
<div class="a" style="left:102px;top:790px;width:1px;height:7px;background:#606060;box-shadow:1px 0 0 #fff"></div>
<div class="a" style="left:105px;top:790px;width:1px;height:7px;background:#606060;box-shadow:1px 0 0 #fff"></div>
<div class="a" style="left:13px;top:805px;width:61px;height:22px;background:#fff;border:1px solid #a0a0a0;border-top:none;border-radius:0 0 3px 3px;background:linear-gradient(#f8f8f8,#fff)"></div>
<div class="t" style="left:18.4px;top:811.00px;font-size:11.70px;color:#000;transform:scaleX(0.935);transform-origin:0 0;">Hierarchie</div>
<div class="a" style="left:74px;top:806px;width:66px;height:18px;border:1px solid #a0a0a0;border-top:none;border-radius:0 0 3px 3px;background:linear-gradient(#f0f0f0,#e4e4e4)"></div>
<div class="t" style="left:78.8px;top:810.00px;font-size:11.70px;color:#000;transform:scaleX(0.935);transform-origin:0 0;">Sichtbarkeit</div>
<div class="a" style="left:143px;top:806px;width:20px;height:18px;border-bottom:1px solid #a0a0a0;overflow:hidden"></div>
<div class="t" style="left:146.5px;top:810.00px;font-size:11.70px;color:#000;transform:scaleX(0.935);transform-origin:0 0;">Pro</div>
<div class="a" style="left:162px;top:811px;width:15px;height:15px;border:1px solid #c0c0c0;background:linear-gradient(#f0f0f0,#dcdcdc)"></div>
<div class="a" style="left:178px;top:811px;width:15px;height:15px;border:1px solid #c0c0c0;background:linear-gradient(#f0f0f0,#dcdcdc)"></div>
<svg class="a" style="left:168px;top:815px;" width="4" height="7" viewBox="0 0 4 7"><path d="M4 0V7L0 3.5Z" fill="#4060b0"/></svg>
<svg class="a" style="left:184px;top:815px;" width="4" height="7" viewBox="0 0 4 7"><path d="M0 0V7L4 3.5Z" fill="#4060b0"/></svg>
<div class="a" style="left:205px;top:112px;width:1px;height:719px;background:#a0a0a0;box-shadow:1px 0 0 #fff"></div>
<div class="a" style="left:8px;top:830px;width:198px;height:1px;background:#a0a0a0"></div>
<div class="a" style="left:210px;top:115px;width:1249px;height:693px;border:1px solid;border-color:#a0a0a0 #7c7c7c #7c7c7c #a0a0a0"></div>
<div class="a" style="left:211px;top:116px;width:1247px;height:691px;border:1px solid;border-color:#696969 #fff #fff #696969;background:#f0f0f0"></div>
<div class="a" style="left:212px;top:117px;width:1242px;height:684px;background:#fff"></div>
<div class="a" style="left:212px;top:784px;width:1225px;height:16px;background:linear-gradient(#e6e6e6,#f2f2f2)"></div>
<svg class="a" style="left:218px;top:789px;" width="4" height="7" viewBox="0 0 4 7"><path d="M4 0V7L0 3.5Z" fill="#505050"/></svg>
<svg class="a" style="left:1425px;top:789px;" width="4" height="7" viewBox="0 0 4 7"><path d="M0 0V7L4 3.5Z" fill="#505050"/></svg>
<div class="a" style="left:212px;top:784px;width:0px;height:16px;background:#f0f0f0;background:linear-gradient(#e8e8e8,#f4f4f4)"></div>
<div class="a" style="left:406px;top:785px;width:1008px;height:14px;border:1px solid #979797;border-radius:2px;background:linear-gradient(#f4f4f4 0%,#e8e8e8 50%,#d4d4d4 51%,#dcdcdc 100%)"></div>
<div class="a" style="left:906px;top:789px;width:1px;height:7px;background:#606060;box-shadow:1px 0 0 #fff"></div>
<div class="a" style="left:909px;top:789px;width:1px;height:7px;background:#606060;box-shadow:1px 0 0 #fff"></div>
<div class="a" style="left:912px;top:789px;width:1px;height:7px;background:#606060;box-shadow:1px 0 0 #fff"></div>
<div class="a" style="left:1437px;top:117px;width:17px;height:667px;background:linear-gradient(90deg,#e6e6e6,#f2f2f2)"></div>
<svg class="a" style="left:1442px;top:124px;" width="7" height="4" viewBox="0 0 7 4"><path d="M0 4L3.5 0L7 4Z" fill="#505050"/></svg>
<svg class="a" style="left:1442px;top:772px;" width="7" height="4" viewBox="0 0 7 4"><path d="M0 0L3.5 4L7 0Z" fill="#505050"/></svg>
<div class="a" style="left:1438px;top:166px;width:15px;height:387px;border:1px solid #979797;border-radius:2px;background:linear-gradient(90deg,#f4f4f4 0%,#e8e8e8 50%,#d4d4d4 51%,#dcdcdc 100%)"></div>
<div class="a" style="left:1441px;top:355px;width:9px;height:1px;background:#606060;box-shadow:0 1px 0 #fff"></div>
<div class="a" style="left:1441px;top:358px;width:9px;height:1px;background:#606060;box-shadow:0 1px 0 #fff"></div>
<div class="a" style="left:1441px;top:361px;width:9px;height:1px;background:#606060;box-shadow:0 1px 0 #fff"></div>
<div class="a" style="left:1437px;top:784px;width:17px;height:16px;background:#f0f0f0"></div>
<div class="a" style="left:1441px;top:812px;width:16px;height:16px;background:#f0f0f0;border:1px solid;border-color:#fff #a0a0a0 #a0a0a0 #fff"></div>
<svg class="a" style="left:1443px;top:814px;" width="12" height="12" viewBox="0 0 12 12"><rect x="0.5" y="2.5" width="7" height="5" fill="#fff" stroke="#0000c0" stroke-width="1.2"/><rect x="3.5" y="5.5" width="7" height="5" fill="#fff" stroke="#0000c0" stroke-width="1.2"/><path d="M9 3L11 1" stroke="#0000c0"/></svg>
<div class="a" style="left:1459px;top:830px;width:26px;height:1px;background:#a0a0a0"></div>
<div class="a" style="left:1458px;top:115px;width:27px;height:526px;border:1px solid;border-color:#fff #a0a0a0 #a0a0a0 #fff"></div>
<svg class="a" style="left:1464px;top:127px;" width="17" height="16" viewBox="0 0 17 16"><path d="M3 2H13V14H3Z" fill="#e6e6e6" stroke="#999999"/><path d="M1 3V13M15 3V13" stroke="#999999" stroke-width="1.5"/><rect x="4" y="3" width="8" height="5" fill="#999999"/><circle cx="8" cy="10" r="2.5" fill="#fff" stroke="#999999"/><path d="M6.5 11.5L9.5 8.5" stroke="#999999"/></svg>
<svg class="a" style="left:1464px;top:148px;" width="17" height="16" viewBox="0 0 17 16"><path d="M0.5 0V14.5H16" stroke="#999999" fill="none"/><rect x="0" y="0" width="1" height="1" fill="#606060"/><rect x="1" y="1" width="15" height="7" fill="#999999"/><path d="M3.5 11.5H6.5M5.5 9.5V12.5" stroke="#999999"/><path d="M7.5 11.5H10.5M9.5 9.5V12.5" stroke="#999999"/><path d="M11.5 11.5H14.5M13.5 9.5V12.5" stroke="#999999"/></svg>
<svg class="a" style="left:1464px;top:168px;" width="17" height="16" viewBox="0 0 17 16"><path d="M0.5 0V14.5H16" stroke="#999999" fill="none"/><rect x="0" y="0" width="1" height="1" fill="#606060"/><rect x="1.5" y="1.5" width="5" height="5" fill="none" stroke="#999999"/><rect x="10.5" y="1.5" width="5" height="5" fill="none" stroke="#999999"/><path d="M3 5L5 3M12 3L14 5" stroke="#999999"/><path d="M1.5 11.5H4.5M3.5 9.5V12.5" stroke="#999999"/><path d="M4.5 11.5H7.5M6.5 9.5V12.5" stroke="#999999"/><path d="M10.5 11.5H13.5M12.5 9.5V12.5" stroke="#999999"/><path d="M13.5 11.5H16.5M15.5 9.5V12.5" stroke="#999999"/></svg>
<svg class="a" style="left:1464px;top:190px;" width="17" height="16" viewBox="0 0 17 16"><path d="M0.5 0V14.5H16" stroke="#999999" fill="none"/><rect x="0" y="0" width="1" height="1" fill="#606060"/><rect x="1.5" y="1.5" width="11" height="7" fill="none" stroke="#999999"/><path d="M2 6L4.5 3L7 6L9.5 3L12 6" stroke="#999999" fill="none"/><path d="M14.5 1V9M13 3H16M13 6H16" stroke="#999999"/><path d="M1.5 11.5H4.5M3.5 9.5V12.5" stroke="#999999"/><path d="M4.5 11.5H7.5M6.5 9.5V12.5" stroke="#999999"/></svg>
<svg class="a" style="left:1464px;top:211px;" width="17" height="16" viewBox="0 0 17 16"><path d="M0.5 0V14.5H16" stroke="#999999" fill="none"/><rect x="0" y="0" width="1" height="1" fill="#606060"/><rect x="1.5" y="1.5" width="11" height="7" fill="none" stroke="#999999"/><path d="M2 8L5 4L7 6L9 3L12 8Z" fill="#999999"/><path d="M14.5 1V9M13 3H16M13 6H16" stroke="#999999"/><path d="M2 11.5H16" stroke="#999999" stroke-dasharray="1 2"/><path d="M2 12.5H16" stroke="#999999" stroke-dasharray="1 2"/></svg>
<svg class="a" style="left:1464px;top:233px;" width="17" height="16" viewBox="0 0 17 16"><path d="M0.5 0V14.5H16" stroke="#999999" fill="none"/><rect x="0" y="0" width="1" height="1" fill="#606060"/><rect x="1" y="1" width="11" height="8" fill="#999999"/><path d="M14.5 1V8M13 3H16M13 6H16" stroke="#999999"/><path d="M4.5 11.5H7.5M6.5 9.5V12.5" stroke="#999999"/><path d="M8.5 11.5H11.5M10.5 9.5V12.5" stroke="#999999"/><path d="M12.5 11.5H15.5M14.5 9.5V12.5" stroke="#999999"/></svg>
<svg class="a" style="left:1464px;top:252px;" width="17" height="16" viewBox="0 0 17 16"><path d="M0.5 0V14.5H16" stroke="#999999" fill="none"/><rect x="0" y="0" width="1" height="1" fill="#606060"/><rect x="1" y="1" width="15" height="7" fill="#999999"/><path d="M3 10.5H9" stroke="#999999" stroke-dasharray="1 2"/><path d="M3 11.5H9" stroke="#999999" stroke-dasharray="1 2"/><path d="M11.5 11.5H14.5M13.5 9.5V12.5" stroke="#999999"/></svg>
<svg class="a" style="left:1464px;top:274px;" width="17" height="16" viewBox="0 0 17 16"><path d="M0.5 0V14.5H16" stroke="#999999" fill="none"/><rect x="0" y="0" width="1" height="1" fill="#606060"/><rect x="1" y="2" width="15" height="6" fill="#999999"/><path d="M15.5 0V8" stroke="#999999"/><path d="M4 10.5H14" stroke="#999999" stroke-dasharray="1 2"/><path d="M2 13.5H16" stroke="#999999" stroke-dasharray="1 2"/></svg>
<svg class="a" style="left:1464px;top:294px;" width="17" height="16" viewBox="0 0 17 16"><path d="M0.5 0V14.5H16" stroke="#999999" fill="none"/><rect x="0" y="0" width="1" height="1" fill="#606060"/><rect x="1" y="1" width="15" height="7" fill="#999999"/><path d="M7 10.5H15" stroke="#999999" stroke-dasharray="1 2"/><path d="M2 13.5H16" stroke="#999999" stroke-dasharray="1 2"/></svg>
<svg class="a" style="left:1464px;top:316px;" width="17" height="16" viewBox="0 0 17 16"><path d="M0.5 14.5H16" stroke="#999999"/><rect x="3" y="1" width="13" height="13" fill="#999999"/><path d="M0.5 1V14" stroke="#999999" stroke-dasharray="1 1"/></svg>
<svg class="a" style="left:1464px;top:336px;" width="17" height="16" viewBox="0 0 17 16"><path d="M0.5 0V14.5H16" stroke="#999999" fill="none"/><rect x="0" y="0" width="1" height="1" fill="#606060"/><rect x="1" y="1" width="11" height="8" fill="#999999"/><path d="M14.5 1V8M13 3H16M13 6H16" stroke="#999999"/><path d="M4.5 11.5H7.5M6.5 9.5V12.5" stroke="#999999"/><path d="M8.5 11.5H11.5M10.5 9.5V12.5" stroke="#999999"/><path d="M12.5 11.5H15.5M14.5 9.5V12.5" stroke="#999999"/></svg>
<svg class="a" style="left:1464px;top:357px;" width="17" height="16" viewBox="0 0 17 16"><path d="M0.5 0V14.5H16" stroke="#999999" fill="none"/><rect x="0" y="0" width="1" height="1" fill="#606060"/><rect x="1" y="1" width="15" height="7" fill="#999999"/><path d="M3 11.5H14" stroke="#999999" stroke-dasharray="1 2"/><circle cx="14" cy="12" r="1" fill="none" stroke="#999999"/></svg>
<svg class="a" style="left:1464px;top:379px;" width="17" height="16" viewBox="0 0 17 16"><path d="M0.5 0V14.5H16" stroke="#999999" fill="none"/><rect x="0" y="0" width="1" height="1" fill="#606060"/><rect x="1" y="1" width="15" height="7" fill="#999999"/><path d="M3 10.5H8" stroke="#999999" stroke-dasharray="1 2"/><circle cx="10.5" cy="11" r="1.5" fill="none" stroke="#999999"/><circle cx="13.5" cy="11" r="1.5" fill="none" stroke="#999999"/></svg>
<svg class="a" style="left:1464px;top:399px;" width="17" height="16" viewBox="0 0 17 16"><path d="M0.5 0V14.5H16" stroke="#999999" fill="none"/><rect x="0" y="0" width="1" height="1" fill="#606060"/><rect x="1" y="1" width="11" height="8" fill="#999999"/><path d="M14.5 1V8M13 3H16M13 6H16" stroke="#999999"/><circle cx="10.5" cy="11.5" r="1.5" fill="none" stroke="#999999"/><circle cx="13.5" cy="11.5" r="1.5" fill="none" stroke="#999999"/></svg>
<svg class="a" style="left:1464px;top:421px;" width="17" height="16" viewBox="0 0 17 16"><path d="M0.5 0V14.5H16" stroke="#999999" fill="none"/><rect x="0" y="0" width="1" height="1" fill="#606060"/><rect x="1" y="1" width="15" height="7" fill="#999999"/><text x="6" y="13.5" font-size="6.5" font-weight="bold" fill="#999999" font-family="Liberation Sans">AG</text><path d="M2 12H5M3.5 10.5V13.5" stroke="#999999"/></svg>
<svg class="a" style="left:1464px;top:441px;" width="17" height="16" viewBox="0 0 17 16"><path d="M0.5 0V14.5H16" stroke="#999999" fill="none"/><rect x="0" y="0" width="1" height="1" fill="#606060"/><rect x="1.5" y="1.5" width="10" height="7" fill="none" stroke="#999999"/><path d="M3 8L10 2" stroke="#999999"/><path d="M14.5 1V9M13 3H16M13 6H16" stroke="#999999"/><text x="6" y="13.5" font-size="6.5" font-weight="bold" fill="#999999" font-family="Liberation Sans">AG</text></svg>
<svg class="a" style="left:1464px;top:462px;" width="17" height="16" viewBox="0 0 17 16"><path d="M0.5 0V14.5H16" stroke="#999999" fill="none"/><rect x="0" y="0" width="1" height="1" fill="#606060"/><rect x="1.5" y="1.5" width="10" height="7" fill="none" stroke="#999999"/><path d="M2 5L4 2L6 5L8 2L10 5M2 7H11" stroke="#999999" fill="none"/><path d="M14.5 1V9M13 3H16M13 6H16" stroke="#999999"/><text x="6" y="13.5" font-size="6.5" font-weight="bold" fill="#999999" font-family="Liberation Sans">AG</text><path d="M2 11.5H5M2 13H5" stroke="#999999"/></svg>
<svg class="a" style="left:1464px;top:484px;" width="17" height="16" viewBox="0 0 17 16"><path d="M0.5 0V14.5H16" stroke="#999999" fill="none"/><rect x="0" y="0" width="1" height="1" fill="#606060"/><rect x="1.5" y="1.5" width="10" height="7" fill="none" stroke="#999999"/><path d="M2 5L4 2L6 5L8 2L10 5M2 7H11" stroke="#999999" fill="none"/><path d="M14.5 1V9M13 3H16M13 6H16" stroke="#999999"/><text x="6" y="13.5" font-size="6.5" font-weight="bold" fill="#999999" font-family="Liberation Sans">TK</text><path d="M2 11.5H5M2 13H5" stroke="#999999"/></svg>
<div class="a" style="left:1462px;top:506px;width:21px;height:1px;background:#a0a0a0;box-shadow:0 1px 0 #fff"></div>
<svg class="a" style="left:1462px;top:512px;" width="18" height="14" viewBox="0 0 18 14"><path d="M3 0L8 5" stroke="#e0c000" stroke-width="2"/><rect x="0.5" y="4.5" width="17" height="9" rx="3" fill="#f8f000" stroke="#a09000"/><text x="1.5" y="12" font-size="7.5" font-weight="bold" fill="#000" font-family="Liberation Sans">1.4v</text></svg>
<svg class="a" style="left:1469px;top:532px;" width="4" height="7" viewBox="0 0 4 7"><path d="M0 0V7L4 3.5Z" fill="#000"/></svg>
<svg class="a" style="left:1464px;top:546px;" width="17" height="16" viewBox="0 0 17 16"><rect x="2" y="2" width="13" height="12" fill="#999999"/><path d="M0 4H17M0 8H17M0 12H17M4 0V16M8 0V16M12 0V16" stroke="#999999" stroke-dasharray="1 1.5"/></svg>
<svg class="a" style="left:1469px;top:565px;" width="4" height="7" viewBox="0 0 4 7"><path d="M0 0V7L4 3.5Z" fill="#a0a0a0"/></svg>
<div class="a" style="left:1462px;top:579px;width:21px;height:1px;background:#a0a0a0;box-shadow:0 1px 0 #fff"></div>
<svg class="a" style="left:1463px;top:590px;" width="18" height="14" viewBox="0 0 18 14"><path d="M2 9L8 3L16 9L10 13Z" fill="#f0f0f0" stroke="#a8a8a8"/><path d="M5 6L12 11" stroke="#a8a8a8"/></svg>
<div class="a" style="left:1462px;top:612px;width:21px;height:1px;background:#a0a0a0;box-shadow:0 1px 0 #fff"></div>
<svg class="a" style="left:1463px;top:620px;" width="18" height="16" viewBox="0 0 18 16"><circle cx="4" cy="12" r="3" fill="none" stroke="#909090" stroke-width="1.5"/><path d="M6 10L12 4L17 4M12 4V8" fill="none" stroke="#909090" stroke-width="1.5"/></svg>
<div class="a" style="left:210px;top:808px;width:121px;height:21px;border:1px solid #8c8c8c;border-bottom:2px solid #202020;border-top:none;border-radius:0 0 4px 4px;background:#f0f0f0;box-shadow:inset 1px 0 0 #fff"></div>
<svg class="a" style="left:213px;top:810px;" width="16" height="16" viewBox="0 0 16 16"><path d="M0.5 0.5H10.5L15.5 5.5V15.5H0.5Z" fill="#fff" stroke="#000"/><path d="M10.5 0.5V5.5H15.5" fill="none" stroke="#000"/><path d="M1 3.5H3.5M2.5 4.5V9.5H4M10 4.5H8V11H6.5M2.5 12.5V15" fill="none" stroke="#f00000" stroke-width="1.2"/><path d="M4 2.2Q6.5 2 7.5 4.5Q6.5 7 4 7Q5.2 4.5 4 2.2Z" fill="#fff" stroke="#000" stroke-width="1"/><path d="M4 9L6.3 11L4 13.5M6.3 9.2V12.8M3 14.2L4.5 12.8" fill="none" stroke="#000" stroke-width="1"/></svg>
<div class="t" style="left:233.5px;top:812.00px;font-size:12.80px;color:#000;transform:scaleX(0.935);transform-origin:0 0;">mosfet_schaltung</div>
<div class="a" style="left:331px;top:808px;width:96px;height:21px;border:1px solid #8c8c8c;border-bottom:2px solid #202020;border-top:none;border-radius:0 0 4px 4px;background:#f0f0f0;box-shadow:inset 1px 0 0 #fff"></div>
<svg class="a" style="left:335px;top:810px;" width="16" height="16" viewBox="0 0 16 16"><path d="M0.5 0.5H10.5L15.5 5.5V15.5H0.5Z" fill="#fff" stroke="#000"/><path d="M10.5 0.5V5.5H15.5" fill="none" stroke="#000"/><path d="M1 3.5H3.5M2.5 4.5V9.5H4M10 4.5H8V11H6.5M2.5 12.5V15" fill="none" stroke="#f00000" stroke-width="1.2"/><path d="M4 2.2Q6.5 2 7.5 4.5Q6.5 7 4 7Q5.2 4.5 4 2.2Z" fill="#fff" stroke="#000" stroke-width="1"/><path d="M4 9L6.3 11L4 13.5M6.3 9.2V12.8M3 14.2L4.5 12.8" fill="none" stroke="#000" stroke-width="1"/></svg>
<div class="t" style="left:355.6px;top:812.00px;font-size:12.80px;color:#000;transform:scaleX(0.935);transform-origin:0 0;">Schaltung3 *</div>
<div class="a" style="left:428px;top:807px;width:151px;height:24px;border:1px solid #8c8c8c;border-bottom:2px solid #202020;border-top:none;border-radius:0 0 4px 4px;background:#f0f0f0;box-shadow:inset 1px 0 0 #fff"></div>
<svg class="a" style="left:432px;top:811px;" width="16" height="16" viewBox="0 0 16 16"><path d="M0.5 0.5H10.5L15.5 5.5V15.5H0.5Z" fill="#fff" stroke="#000"/><path d="M10.5 0.5V5.5H15.5" fill="none" stroke="#000"/><path d="M1 3.5H3.5M2.5 4.5V9.5H4M10 4.5H8V11H6.5M2.5 12.5V15" fill="none" stroke="#f00000" stroke-width="1.2"/><path d="M4 2.2Q6.5 2 7.5 4.5Q6.5 7 4 7Q5.2 4.5 4 2.2Z" fill="#fff" stroke="#000" stroke-width="1"/><path d="M4 9L6.3 11L4 13.5M6.3 9.2V12.8M3 14.2L4.5 12.8" fill="none" stroke="#000" stroke-width="1"/></svg>
<div class="t" style="left:451.7px;top:813.00px;font-size:12.60px;color:#000;transform:scaleX(0.935);transform-origin:0 0;">pwm_vs_kondensator *</div>
<div class="a" style="left:8px;top:835px;width:1477px;height:1px;background:#a0a0a0"></div>
<div class="a" style="left:8px;top:836px;width:1477px;height:1px;background:#fff"></div>
<div class="a" style="left:12px;top:838px;width:14px;height:13px;background:#f0f0f0;border:1px solid;border-color:#fff #808080 #808080 #fff"></div>
<svg class="a" style="left:15px;top:841px;" width="8" height="7" viewBox="0 0 8 7"><path d="M1 0.5L7 6.5M7 0.5L1 6.5" stroke="#000" stroke-width="2"/></svg>
<div class="a" style="left:12px;top:854px;width:14px;height:13px;background:#f0f0f0;border:1px solid;border-color:#fff #808080 #808080 #fff"></div>
<svg class="a" style="left:17px;top:857px;" width="4" height="7" viewBox="0 0 4 7"><path d="M0 0V7L4 3.5Z" fill="#b0b0b0"/></svg>
<div class="a" style="left:10px;top:871px;width:18px;height:137px;background:linear-gradient(#d4e0ee,#c4d4e8)"></div>
<div class="t" style="left:11.5px;top:1007px;font-size:12.6px;color:#4a4a58;transform-origin:0 0;transform:rotate(-90deg);">Tabellenansicht</div>
<div class="a" style="left:32px;top:841px;width:1448px;height:148px;border:1px solid;border-color:#a0a0a0 #8a8a8a #8a8a8a #a0a0a0;background:#fbfbfb"></div>
<div class="a" style="left:34px;top:843px;width:1443px;height:143px;background:#fff;border:1px solid;border-color:#8a8a8a #a0a0a0 #8a8a8a #8a8a8a"></div>
<div class="t" style="left:41.3px;top:849.00px;font-size:12.60px;color:#000;transform:scaleX(0.935);transform-origin:0 0;">------ Überprüfe SPICE-Netzliste auf pwm_vs_kondensator - Freitag, 17. Juni 2016, 15:14:35 ------</div>
<div class="t" style="left:41.3px;top:869.00px;font-size:12.60px;color:#000;transform:scaleX(0.935);transform-origin:0 0;">======= Prüfung der SPICE-Netzliste abgeschlossen. 0 Fehler, 0 Warnung(en) =======</div>
<div class="a" style="left:35px;top:989px;width:61px;height:19px;border:1px solid #8c8c8c;border-bottom:2px solid #6a6a6a;border-top:none;border-radius:0 0 3px 3px;background:#f0f0f0;box-shadow:inset 1px 0 0 #fff"></div>
<div class="t" style="left:38.5px;top:992.00px;font-size:11.60px;color:#000;transform:scaleX(0.935);transform-origin:0 0;">Ergebnisse</div>
<div class="a" style="left:98px;top:989px;width:40px;height:19px;border:1px solid #8c8c8c;border-bottom:2px solid #6a6a6a;border-top:none;border-radius:0 0 3px 3px;background:#f0f0f0;box-shadow:inset 1px 0 0 #fff"></div>
<div class="t" style="left:102px;top:992.00px;font-size:11.60px;color:#000;transform:scaleX(0.935);transform-origin:0 0;">Netze</div>
<div class="a" style="left:140px;top:989px;width:72px;height:19px;border:1px solid #8c8c8c;border-bottom:2px solid #6a6a6a;border-top:none;border-radius:0 0 3px 3px;background:#f0f0f0;box-shadow:inset 1px 0 0 #fff"></div>
<div class="t" style="left:144px;top:992.00px;font-size:11.60px;color:#000;transform:scaleX(0.935);transform-origin:0 0;">Bauelemente</div>
<div class="a" style="left:214px;top:989px;width:67px;height:19px;border:1px solid #8c8c8c;border-bottom:2px solid #6a6a6a;border-top:none;border-radius:0 0 3px 3px;background:#f0f0f0;box-shadow:inset 1px 0 0 #fff"></div>
<div class="t" style="left:218px;top:992.00px;font-size:11.60px;color:#000;transform:scaleX(0.935);transform-origin:0 0;">Kupferlagen</div>
<div class="a" style="left:283px;top:988px;width:61px;height:22px;border:1px solid #8c8c8c;border-bottom:2px solid #6a6a6a;border-top:none;border-radius:0 0 3px 3px;background:#f0f0f0;box-shadow:inset 1px 0 0 #fff"></div>
<div class="t" style="left:288.5px;top:994.00px;font-size:11.60px;color:#000;transform:scaleX(0.935);transform-origin:0 0;">Simulation</div>
<div class="a" style="left:8px;top:1014px;width:1477px;height:1px;background:#a0a0a0"></div>
<div class="a" style="left:8px;top:1015px;width:1477px;height:1px;background:#fff"></div>
<div class="a" style="left:8px;top:1016px;width:1477px;height:1px;background:#a0a0a0"></div>
<div class="a" style="left:8px;top:1017px;width:1477px;height:1px;background:#fff"></div>
<div class="t" style="left:10px;top:1021.00px;font-size:12.80px;color:#000;transform:scaleX(0.935);transform-origin:0 0;">Interaktive Simulation unterbrechen/fortsetzen</div>
<div class="a" style="left:975px;top:1018px;width:1px;height:17px;background:#d0d0d0;box-shadow:1px 0 0 #fff"></div>
<div class="t" style="left:981px;top:1022.00px;font-size:12.60px;color:#000;transform:scaleX(0.935);transform-origin:0 0;">pwm_vs_kondensator: Simulation läuft.</div>
<div class="a" style="left:1188px;top:1018px;width:1px;height:17px;background:#d0d0d0;box-shadow:1px 0 0 #fff"></div>
<div class="t" style="left:1193.5px;top:1022.00px;font-size:12.10px;color:#000;transform:scaleX(0.935);transform-origin:0 0;">Tran: 0.814 s</div>
<div class="a" style="left:1401px;top:1018px;width:1px;height:17px;background:#d0d0d0;box-shadow:1px 0 0 #fff"></div>
<div class="a" style="left:1465px;top:1018px;width:1px;height:17px;background:#d0d0d0;box-shadow:1px 0 0 #fff"></div>
<div class="a" style="left:1406.0px;top:1020px;width:6px;height:13px;background:#22e022;border:1px solid #1a9a1a;box-shadow:inset 1px 0 0 #9af09a"></div>
<div class="a" style="left:1413.7px;top:1020px;width:6px;height:13px;background:#22e022;border:1px solid #1a9a1a;box-shadow:inset 1px 0 0 #9af09a"></div>
<div class="a" style="left:1421.4px;top:1020px;width:6px;height:13px;background:#f0f0f0;border:1px solid #d4d4d4"></div>
<div class="a" style="left:1429.1px;top:1020px;width:6px;height:13px;background:#f0f0f0;border:1px solid #d4d4d4"></div>
<div class="a" style="left:1436.8px;top:1020px;width:6px;height:13px;background:#f0f0f0;border:1px solid #d4d4d4"></div>
<div class="a" style="left:1444.5px;top:1020px;width:6px;height:13px;background:#22e022;border:1px solid #1a9a1a;box-shadow:inset 1px 0 0 #9af09a"></div>
<div class="a" style="left:1452.2px;top:1020px;width:6px;height:13px;background:#22e022;border:1px solid #1a9a1a;box-shadow:inset 1px 0 0 #9af09a"></div>
<svg class="a" style="left:1470px;top:1024px;" width="10" height="10" viewBox="0 0 10 10"><path d="M8 2V3M5 5V6M8 5V6M2 8V9M5 8V9M8 8V9" stroke="#a0a0a0"/></svg>
<svg class="a" style="left:212px;top:117px;overflow:hidden" width="1225" height="667" viewBox="212 117 1225 667"><defs><pattern id="dg" x="215" y="118" width="27" height="27" patternUnits="userSpaceOnUse"><rect x="0" y="0" width="1" height="1" fill="#000"/><rect x="14" y="0" width="1" height="1" fill="#000"/><rect x="0" y="14" width="1" height="1" fill="#000"/><rect x="14" y="14" width="1" height="1" fill="#000"/></pattern></defs><rect x="212" y="117" width="1225" height="667" fill="#fff"/><rect x="212" y="117" width="1225" height="667" fill="url(#dg)"/><rect x="1408" y="117" width="2" height="667" fill="#787878"/><rect x="1410" y="237" width="27" height="2" fill="#787878"/><rect x="1410" y="381" width="27" height="2" fill="#787878"/><rect x="1410" y="525" width="27" height="2" fill="#787878"/><rect x="1410" y="669" width="27" height="2" fill="#787878"/><text x="1422.6" y="166.5" font-size="13.5" fill="#8c8c8c" text-anchor="middle" font-family="Liberation Sans">A</text><text x="1422.6" y="310.5" font-size="13.5" fill="#8c8c8c" text-anchor="middle" font-family="Liberation Sans">B</text><text x="1422.6" y="454.5" font-size="13.5" fill="#8c8c8c" text-anchor="middle" font-family="Liberation Sans">C</text><text x="1422.6" y="598.5" font-size="13.5" fill="#8c8c8c" text-anchor="middle" font-family="Liberation Sans">D</text><text x="1422.6" y="742.5" font-size="13.5" fill="#8c8c8c" text-anchor="middle" font-family="Liberation Sans">E</text><rect x="283.5" y="415.5" width="80" height="53" fill="#c0dcc0" stroke="#000" stroke-width="1"/><rect x="286.5" y="423.5" width="21" height="15" fill="#b4b4b4" stroke="#fff" stroke-width="1"/><rect x="313.5" y="423.5" width="21" height="15" fill="#b4b4b4" stroke="#fff" stroke-width="1"/><rect x="340.5" y="423.5" width="21" height="15" fill="#b4b4b4" stroke="#fff" stroke-width="1"/><path d="M288.5 434 L294 429.5 L298 432.5 L302 429 L306 432" fill="none" stroke="#000" stroke-width="1"/><path d="M315.5 432 Q319.5 437 324 431.5 Q328.5 425.5 332.5 431" fill="none" stroke="#000" stroke-width="1"/><path d="M342 433.5 H346 V428.5 H350 V433.5 H355 V428.5 H359.5" fill="none" stroke="#000" stroke-width="1.2"/><path d="M292 450.5 H301 M296 446 V455 M346 450.5 H355" stroke="#000" stroke-width="1.1"/><circle cx="296" cy="460.3" r="4.5" fill="#a8a8b0" stroke="#000" stroke-width="1.2"/><circle cx="323" cy="460.3" r="4.5" fill="#a8a8b0" stroke="#000" stroke-width="1.2"/><circle cx="350" cy="460.3" r="4.5" fill="#a8a8b0" stroke="#000" stroke-width="1.2"/><path d="M296,461 L296,483" fill="none" stroke="#000" stroke-width="2" stroke-linejoin="miter" stroke-linecap="square"/><path d="M323,461 L323,483" fill="none" stroke="#000" stroke-width="2" stroke-linejoin="miter" stroke-linecap="square"/><path d="M350,461 L350,483" fill="none" stroke="#000" stroke-width="2" stroke-linejoin="miter" stroke-linecap="square"/><rect x="458.5" y="280.5" width="148" height="107" fill="#c0dcc0" stroke="#000" stroke-width="1"/><rect x="463.5" y="285.5" width="93" height="65.5" fill="#c0c0c0" stroke="#fff" stroke-width="1"/><path d="M469 319 Q471 296 481 288 Q489 283 497 288 Q505 294 507.5 316 Q510 339 521 347 Q527.5 352 534 347 Q544 339 546 317" fill="none" stroke="#000" stroke-width="1"/><path d="M469 319 Q472 303 482 299 Q489 296 497 299 Q505 303 507.5 316 Q510 331 521 336 Q527.5 339 534 336 Q544 331 546 317" fill="none" stroke="#000" stroke-width="1"/><text x="567" y="321" font-size="11" fill="#202020" font-family="Liberation Sans">Ext Trig</text><path d="M599 329.5 H605 M602 326.5 V332.5 M597 353 H603" stroke="#000" stroke-width="1"/><text x="472" y="367.5" font-size="10" fill="#202020" text-anchor="middle" font-family="Liberation Sans">A</text><text x="526" y="367" font-size="10" fill="#202020" text-anchor="middle" font-family="Liberation Sans">B</text><path d="M461 382 H467 M464 379 V385 M488 383 H494 M515 382 H521 M518 379 V385 M542 383 H548" stroke="#202020" stroke-width="1"/><path d="M593,334 L620,334" fill="none" stroke="#000" stroke-width="2" stroke-linejoin="miter" stroke-linecap="square"/><path d="M593,334 L593,348 L620,348" fill="none" stroke="#000" stroke-width="2" stroke-linejoin="miter" stroke-linecap="square"/><path d="M472,376 L472,402" fill="none" stroke="#000" stroke-width="2" stroke-linejoin="miter" stroke-linecap="square"/><path d="M472,376 L485,376 L485,402" fill="none" stroke="#000" stroke-width="2" stroke-linejoin="miter" stroke-linecap="square"/><path d="M526,376 L526,402" fill="none" stroke="#000" stroke-width="2" stroke-linejoin="miter" stroke-linecap="square"/><path d="M526,376 L539,376 L539,402" fill="none" stroke="#000" stroke-width="2" stroke-linejoin="miter" stroke-linecap="square"/><polygon points="476.80,377.49 473.99,380.30 470.01,380.30 467.20,377.49 467.20,373.51 470.01,370.70 473.99,370.70 476.80,373.51" fill="#a8a8b0" stroke="#000" stroke-width="1"/><path d="M472 372.3L475.2 375.5L472 378.7L468.8 375.5Z" fill="#000"/><polygon points="530.80,377.49 527.99,380.30 524.01,380.30 521.20,377.49 521.20,373.51 524.01,370.70 527.99,370.70 530.80,373.51" fill="#a8a8b0" stroke="#000" stroke-width="1"/><path d="M526 372.3L529.2 375.5L526 378.7L522.8 375.5Z" fill="#000"/><polygon points="597.30,335.99 594.49,338.80 590.51,338.80 587.70,335.99 587.70,332.01 590.51,329.20 594.49,329.20 597.30,332.01" fill="#a8a8b0" stroke="#000" stroke-width="1"/><path d="M592.5 330.8L595.7 334L592.5 337.2L589.3 334Z" fill="#000"/><text x="515.1" y="245.6" font-size="19.8" font-weight="bold" fill="#000" font-family="Liberation Serif" textLength="46.7" lengthAdjust="spacingAndGlyphs">XSC1</text><text x="299.5" y="405.6" font-size="19.8" font-weight="bold" fill="#000" font-family="Liberation Serif" textLength="46.5" lengthAdjust="spacingAndGlyphs">XFG1</text><text x="533" y="601" font-size="19" font-weight="bold" fill="#000" text-anchor="middle" font-family="Liberation Sans">R2</text><text x="530" y="644" font-size="19" font-weight="bold" fill="#000" text-anchor="middle" font-family="Liberation Sans">100Ω</text><text x="775" y="600.7" font-size="19" font-weight="bold" fill="#000" text-anchor="middle" font-family="Liberation Sans">R1</text><text x="772.5" y="644" font-size="19" font-weight="bold" fill="#000" text-anchor="middle" font-family="Liberation Sans">500Ω</text><text x="650" y="645.6" font-size="19.6" font-weight="bold" fill="#000" font-family="Liberation Sans">C1</text><text x="650" y="669.3" font-size="19.6" font-weight="bold" fill="#000" font-family="Liberation Sans">2200uF</text><path d="M296,483 L296,618 L500,618" fill="none" stroke="#ff0000" stroke-width="2" stroke-linejoin="miter" stroke-linecap="square"/><path d="M323,483 L323,699 L620,699 L620,712 L674,712 L674,699 L904,699" fill="none" stroke="#ff0000" stroke-width="2" stroke-linejoin="miter" stroke-linecap="square"/><path d="M472,402 L472,618" fill="none" stroke="#ff0000" stroke-width="2" stroke-linejoin="miter" stroke-linecap="square"/><path d="M485,402 L485,699" fill="none" stroke="#ff0000" stroke-width="2" stroke-linejoin="miter" stroke-linecap="square"/><path d="M526,402 L593,455 L593,618" fill="none" stroke="#ff0000" stroke-width="2" stroke-linejoin="miter" stroke-linecap="square"/><path d="M567,618 L743,618" fill="none" stroke="#ff0000" stroke-width="2" stroke-linejoin="miter" stroke-linecap="square"/><path d="M809,618 L904,618 L904,713" fill="none" stroke="#ff0000" stroke-width="2" stroke-linejoin="miter" stroke-linecap="square"/><path d="M634,618 L634,632" fill="none" stroke="#ff0000" stroke-width="2" stroke-linejoin="miter" stroke-linecap="square"/><path d="M634,699 L634,712" fill="none" stroke="#ff0000" stroke-width="2" stroke-linejoin="miter" stroke-linecap="square"/><path d="M500,618 L513,618 L514,615.5 L517,611.6 L523,623.6 L530,611.6 L536.5,623.6 L544,611.6 L550,623.6 L554,618 L567,618" fill="none" stroke="#000" stroke-width="2" stroke-linejoin="miter" stroke-linecap="square"/><path d="M743,618 L756,618 L757,615.5 L760,611.6 L766,623.6 L773,611.6 L779.5,623.6 L787,611.6 L793,623.6 L797,618 L810,618" fill="none" stroke="#000" stroke-width="2" stroke-linejoin="miter" stroke-linecap="square"/><path d="M634,632 L634,661.5" fill="none" stroke="#000" stroke-width="2" stroke-linejoin="miter" stroke-linecap="square"/><path d="M619.5 661.5 H648.5" stroke="#000" stroke-width="3"/><path d="M619.5 675 Q634 662 648.5 675" fill="none" stroke="#000" stroke-width="2.6"/><path d="M634,669 L634,699" fill="none" stroke="#000" stroke-width="2" stroke-linejoin="miter" stroke-linecap="square"/><path d="M619 651 H628 M623.5 646.5 V655.5" stroke="#ff0000" stroke-width="2"/><path d="M904,713 L904,725" fill="none" stroke="#000" stroke-width="2" stroke-linejoin="miter" stroke-linecap="square"/><path d="M890 725.5 H918" stroke="#000" stroke-width="2.2"/><path d="M895 730 H914" stroke="#000" stroke-width="2.2"/><path d="M899.5 735 H909" stroke="#000" stroke-width="2.2"/><circle cx="472" cy="618" r="3.3" fill="#ff0000"/><circle cx="593" cy="618" r="3.3" fill="#ff0000"/><circle cx="634" cy="618" r="3.3" fill="#ff0000"/><circle cx="485" cy="699" r="3.3" fill="#ff0000"/><circle cx="904" cy="699" r="3.3" fill="#ff0000"/><circle cx="634" cy="712" r="3.3" fill="#ff0000"/></svg>
<div class="a" style="left:722px;top:112px;width:659px;height:451px;border-radius:8px;box-shadow:1px 2px 5px rgba(0,0,0,.3)"></div>
<div class="a" style="left:721px;top:110px;width:659px;height:451px;border:1px solid #4a5666;border-radius:7px 7px 5px 5px;background:linear-gradient(#b9cbe4 0%,#c3d4ec 8%,#d2e0f2 30%,#cfdef2 100%)"></div>
<div class="a" style="left:722px;top:111px;width:657px;height:449px;border:1px solid rgba(255,255,255,.55);border-radius:6px 6px 4px 4px"></div>
<div class="t" style="left:729.3px;top:118.00px;font-size:12.40px;color:#000;transform:scaleX(0.935);transform-origin:0 0;">Oszilloskop-XSC1</div>
<div class="a" style="left:1326px;top:110px;width:47px;height:19px;border:1px solid #5c6878;border-top:none;border-radius:0 0 5px 5px;background:linear-gradient(#b7c9e2 0%,#c0d0e8 50%,#c9d8ee 100%);box-shadow:inset 0 0 0 1px rgba(255,255,255,.45)"></div>
<svg class="a" style="left:1343px;top:113px;" width="13" height="12" viewBox="0 0 13 12"><path d="M2.5 2L10.5 10M10.5 2L2.5 10" stroke="#505a66" stroke-width="4.2"/><path d="M2.5 2L10.5 10M10.5 2L2.5 10" stroke="#fafafa" stroke-width="2.6"/></svg>
<div class="a" style="left:728px;top:137px;width:646px;height:417px;background:#f0f0f0;border:1px solid #59667a"></div>
<div class="a" style="left:728px;top:138px;width:645px;height:253px;background:#000;border:2px solid;border-color:#646464 #f8f8f8 #f8f8f8 #646464"></div>
<div class="a" style="left:730px;top:140px;width:641px;height:249px;background:#000;border:2px solid;border-color:#a0a0a0 #e0e0e0 #e0e0e0 #a0a0a0"></div>
<div class="a" style="left:729px;top:137px;width:644px;height:1px;background:#fff"></div>
<svg class="a" style="left:729px;top:138px;" width="644" height="252" viewBox="729 138 644 252"><path d="M802.5 150 V379" stroke="#c8c8c8" stroke-width="1" stroke-dasharray="3 3"/><path d="M864.5 150 V379" stroke="#c8c8c8" stroke-width="1" stroke-dasharray="3 3"/><path d="M926.5 150 V379" stroke="#c8c8c8" stroke-width="1" stroke-dasharray="3 3"/><path d="M988.5 150 V379" stroke="#c8c8c8" stroke-width="1" stroke-dasharray="3 3"/><path d="M1050.5 150 V379" stroke="#c8c8c8" stroke-width="1" stroke-dasharray="3 3"/><path d="M1113.5 150 V379" stroke="#c8c8c8" stroke-width="1" stroke-dasharray="3 3"/><path d="M1175.5 150 V379" stroke="#c8c8c8" stroke-width="1" stroke-dasharray="3 3"/><path d="M1237.5 150 V379" stroke="#c8c8c8" stroke-width="1" stroke-dasharray="3 3"/><path d="M1299.5 150 V379" stroke="#c8c8c8" stroke-width="1" stroke-dasharray="3 3"/><path d="M740 188.5 H1361" stroke="#c8c8c8" stroke-width="1" stroke-dasharray="3 3"/><path d="M740 226.5 H1361" stroke="#c8c8c8" stroke-width="1" stroke-dasharray="3 3"/><path d="M740 265.5 H1361" stroke="#c8c8c8" stroke-width="1" stroke-dasharray="3 3"/><path d="M740 303.5 H1361" stroke="#c8c8c8" stroke-width="1" stroke-dasharray="3 3"/><path d="M740 341.5 H1361" stroke="#c8c8c8" stroke-width="1" stroke-dasharray="3 3"/><rect x="740.5" y="150.5" width="621" height="229" fill="none" stroke="#fff" stroke-width="1"/><rect x="740" y="265" width="622" height="1" fill="#ffffff"/><path d="M741 266h1M742 266h1M744 266h1M745 266h1M746 266h1M747 266h1M748 266h1M749 266h1M750 266h1M751 266h1M752 266h1M753 266h1M755 266h1M756 266h1M760 266h1M762 266h1M764 266h1M765 266h1M766 266h1M767 266h1M769 266h1M772 266h1M773 266h1M774 266h1M775 266h1M776 266h1M778 266h1M779 266h1M781 266h1M782 266h1M785 266h1M787 266h1M790 266h1M792 266h1M793 266h1M795 266h1M796 266h1M797 266h1M802 266h1M806 266h1M809 266h1M811 266h1M816 266h1M817 266h1M819 266h1M820 266h1M821 266h1M822 266h1M823 266h1M825 266h1M826 266h1M827 266h1M829 266h1M830 266h1M831 266h1M835 266h1M836 266h1M837 266h1M840 266h1M841 266h1M842 266h1M843 266h1M844 266h1M846 266h1M847 266h1M848 266h1M849 266h1M853 266h1M856 266h1M861 266h1M862 266h1M863 266h1M865 266h1M866 266h1M867 266h1M868 266h1M869 266h1M870 266h1M871 266h1M872 266h1M873 266h1M874 266h1M875 266h1M878 266h1M879 266h1M880 266h1M881 266h1M882 266h1M885 266h1M886 266h1M887 266h1M888 266h1M889 266h1M890 266h1M892 266h1M893 266h1M895 266h1M896 266h1M897 266h1M898 266h1M899 266h1M903 266h1M904 266h1M905 266h1M907 266h1M909 266h1M910 266h1M917 266h1M918 266h1M919 266h1M920 266h1M921 266h1M922 266h1M923 266h1M926 266h1M930 266h1M931 266h1M932 266h1M933 266h1M934 266h1M938 266h1M941 266h1M946 266h1M947 266h1M949 266h1M952 266h1M953 266h1M956 266h1M957 266h1M958 266h1M961 266h1M965 266h1M966 266h1M967 266h1M968 266h1M971 266h1M973 266h1M976 266h1M977 266h1M978 266h1M979 266h1M981 266h1M982 266h1M983 266h1M985 266h1M986 266h1M989 266h1M991 266h1M992 266h1M993 266h1M994 266h1M995 266h1M996 266h1M997 266h1M999 266h1M1000 266h1M1003 266h1M1004 266h1M1007 266h1M1009 266h1M1010 266h1M1012 266h1M1016 266h1M1018 266h1M1019 266h1M1021 266h1M1022 266h1M1023 266h1M1028 266h1M1032 266h1M1033 266h1M1034 266h1M1035 266h1M1036 266h1M1037 266h1M1041 266h1M1044 266h1M1047 266h1M1049 266h1M1050 266h1M1053 266h1M1054 266h1M1055 266h1M1056 266h1M1057 266h1M1058 266h1M1060 266h1M1062 266h1M1063 266h1M1064 266h1M1066 266h1M1067 266h1M1071 266h1M1072 266h1M1073 266h1M1075 266h1M1076 266h1M1077 266h1M1080 266h1M1081 266h1M1085 266h1M1086 266h1M1088 266h1M1089 266h1M1093 266h1M1095 266h1M1097 266h1M1098 266h1M1101 266h1M1102 266h1M1103 266h1M1104 266h1M1105 266h1M1106 266h1M1107 266h1M1108 266h1M1109 266h1M1110 266h1M1112 266h1M1113 266h1M1114 266h1M1115 266h1M1116 266h1M1117 266h1M1118 266h1M1121 266h1M1122 266h1M1124 266h1M1126 266h1M1127 266h1M1129 266h1M1130 266h1M1133 266h1M1137 266h1M1138 266h1M1139 266h1M1140 266h1M1141 266h1M1143 266h1M1144 266h1M1145 266h1M1149 266h1M1150 266h1M1151 266h1M1152 266h1M1153 266h1M1154 266h1M1155 266h1M1158 266h1M1159 266h1M1161 266h1M1162 266h1M1163 266h1M1164 266h1M1165 266h1M1166 266h1M1167 266h1M1168 266h1M1169 266h1M1170 266h1M1171 266h1M1172 266h1M1173 266h1M1174 266h1M1175 266h1M1176 266h1M1178 266h1M1183 266h1M1184 266h1M1186 266h1M1189 266h1M1195 266h1M1196 266h1M1197 266h1M1205 266h1M1206 266h1M1207 266h1M1208 266h1M1209 266h1M1215 266h1M1216 266h1M1219 266h1M1220 266h1M1222 266h1M1224 266h1M1225 266h1M1226 266h1M1228 266h1M1231 266h1M1232 266h1M1233 266h1M1238 266h1M1239 266h1M1240 266h1M1242 266h1M1244 266h1M1245 266h1M1246 266h1M1250 266h1M1251 266h1M1252 266h1M1253 266h1M1254 266h1M1256 266h1M1259 266h1M1260 266h1M1263 266h1M1264 266h1M1265 266h1M1267 266h1M1269 266h1M1270 266h1M1272 266h1M1274 266h1M1277 266h1M1279 266h1M1280 266h1M1281 266h1M1282 266h1M1283 266h1M1284 266h1M1285 266h1M1286 266h1M1287 266h1M1289 266h1M1292 266h1M1296 266h1M1297 266h1M1298 266h1M1301 266h1M1302 266h1M1303 266h1M1304 266h1M1305 266h1M1307 266h1M1309 266h1M1310 266h1M1311 266h1M1312 266h1M1313 266h1M1320 266h1M1322 266h1M1324 266h1M1327 266h1M1328 266h1M1330 266h1M1331 266h1M1332 266h1M1333 266h1M1336 266h1M1338 266h1M1340 266h1M1341 266h1M1342 266h1M1343 266h1M1345 266h1M1346 266h1M1349 266h1M1350 266h1M1351 266h1M1352 266h1M1353 266h1M1354 266h1M1355 266h1M1356 266h1M1360 266h1M1361 266h1" stroke="#e8e8e8" stroke-width="1" transform="translate(0 .5)"/><path d="M744 267h1M747 267h1M749 267h1M751 267h1M752 267h1M762 267h1M766 267h1M774 267h1M775 267h1M792 267h1M797 267h1M811 267h1M819 267h1M822 267h1M823 267h1M829 267h1M847 267h1M856 267h1M863 267h1M865 267h1M866 267h1M870 267h1M871 267h1M873 267h1M875 267h1M887 267h1M888 267h1M893 267h1M898 267h1M920 267h1M921 267h1M941 267h1M968 267h1M994 267h1M997 267h1M1007 267h1M1035 267h1M1037 267h1M1060 267h1M1063 267h1M1067 267h1M1071 267h1M1073 267h1M1085 267h1M1086 267h1M1089 267h1M1093 267h1M1095 267h1M1105 267h1M1107 267h1M1116 267h1M1118 267h1M1124 267h1M1139 267h1M1141 267h1M1145 267h1M1163 267h1M1169 267h1M1171 267h1M1173 267h1M1174 267h1M1189 267h1M1206 267h1M1209 267h1M1216 267h1M1222 267h1M1225 267h1M1238 267h1M1244 267h1M1245 267h1M1254 267h1M1259 267h1M1280 267h1M1281 267h1M1289 267h1M1304 267h1M1305 267h1M1322 267h1M1328 267h1M1352 267h1M1354 267h1" stroke="#c0c0c0" stroke-width="1" transform="translate(0 .5)"/><path d="M740.5 226.5 H771.5 V264.5 H802.5 V226.5 H833.5 V264.5 H864.5 V226.5 H895.5 V264.5 H926.5 V226.5 H957.5 V264.5 H988.5 V226.5 H1019.5 V264.5 H1050.5 V226.5 H1082.5 V264.5 H1113.5 V226.5 H1144.5 V264.5 H1175.5 V226.5 H1206.5 V264.5 H1237.5 V226.5 H1268.5 V264.5 H1299.5 V226.5 H1330.5 V264.5 H1337.5" fill="none" stroke="#ff0000" stroke-width="1.2"/><path d="M740 249.5 H1337.5" stroke="#ff0000" stroke-width="1.2"/><path d="M740.5 150 V380" stroke="#00ff00" stroke-width="1.2"/><path d="M732.5 143 H748.5 L740.5 151Z" fill="#ff00ff"/><path d="M732.5 142.5 H748.5" stroke="#00ffff" stroke-width="1.6"/><rect x="739.0" y="144.5" width="3" height="4" fill="#ffff00"/><circle cx="740.5" cy="226.5" r="3.2" fill="none" stroke="#ff00ff" stroke-width="1"/></svg>
<div class="a" style="left:729px;top:390px;width:644px;height:16px;background:linear-gradient(#e6e6e6,#f2f2f2)"></div>
<svg class="a" style="left:733px;top:395px;" width="4" height="7" viewBox="0 0 4 7"><path d="M4 0V7L0 3.5Z" fill="#606060"/></svg>
<svg class="a" style="left:1361px;top:395px;" width="4" height="7" viewBox="0 0 4 7"><path d="M0 0V7L4 3.5Z" fill="#606060"/></svg>
<div class="a" style="left:1271px;top:391px;width:83px;height:11px;border:1px solid #979797;border-radius:2px;background:linear-gradient(#f4f4f4 0%,#e8e8e8 50%,#d4d4d4 51%,#dcdcdc 100%)"></div>
<div class="a" style="left:1309px;top:393px;width:1px;height:6px;background:#606060;box-shadow:1px 0 0 #fff"></div>
<div class="a" style="left:1312px;top:393px;width:1px;height:6px;background:#606060;box-shadow:1px 0 0 #fff"></div>
<div class="a" style="left:1315px;top:393px;width:1px;height:6px;background:#606060;box-shadow:1px 0 0 #fff"></div>
<div class="a" style="left:729px;top:407px;width:59px;height:58px;border:1px solid;border-color:#fff #a0a0a0 #a0a0a0 #fff;box-shadow:inset -1px -1px 0 #fff"></div>
<div class="t" style="left:735px;top:417.00px;font-size:11.30px;color:#000;transform:scaleX(0.935);transform-origin:0 0;">T1</div>
<div class="t" style="left:735px;top:431.00px;font-size:11.30px;color:#000;transform:scaleX(0.935);transform-origin:0 0;">T2</div>
<div class="t" style="left:735px;top:451.00px;font-size:11.30px;color:#000;transform:scaleX(0.935);transform-origin:0 0;">T2 bis T1</div>
<div class="a" style="left:755px;top:414px;width:13px;height:15px;border:1px solid #8c8c8c;border-radius:3px;background:linear-gradient(#f8f8f8,#dcdcdc)"></div>
<div class="a" style="left:772px;top:414px;width:13px;height:15px;border:1px solid #8c8c8c;border-radius:3px;background:linear-gradient(#f8f8f8,#dcdcdc)"></div>
<svg class="a" style="left:757px;top:417px;" width="9" height="9" viewBox="0 0 9 9"><path d="M0 4.5L4.5 0V3H9V6H4.5V9Z" fill="#000"/></svg>
<svg class="a" style="left:774px;top:417px;" width="9" height="9" viewBox="0 0 9 9"><path d="M9 4.5L4.5 0V3H0V6H4.5V9Z" fill="#000"/></svg>
<div class="a" style="left:755px;top:432px;width:13px;height:15px;border:1px solid #8c8c8c;border-radius:3px;background:linear-gradient(#f8f8f8,#dcdcdc)"></div>
<div class="a" style="left:772px;top:432px;width:13px;height:15px;border:1px solid #8c8c8c;border-radius:3px;background:linear-gradient(#f8f8f8,#dcdcdc)"></div>
<svg class="a" style="left:757px;top:435px;" width="9" height="9" viewBox="0 0 9 9"><path d="M0 4.5L4.5 0V3H9V6H4.5V9Z" fill="#000"/></svg>
<svg class="a" style="left:774px;top:435px;" width="9" height="9" viewBox="0 0 9 9"><path d="M9 4.5L4.5 0V3H0V6H4.5V9Z" fill="#000"/></svg>
<div class="a" style="left:789px;top:407px;width:412px;height:59px;background:#fff;border:1px solid;border-color:#a0a0a0 #c8c8c8 #fff #a0a0a0;box-shadow:inset 1px 1px 0 #696969"></div>
<div class="t" style="left:623.4px;width:400px;text-align:center;top:411.00px;font-size:11.30px;color:#000;font-family:"Liberation Sans",sans-serif;transform:scaleX(0.935);transform-origin:50% 0;">Zeit</div>
<div class="t" style="left:797px;top:424.00px;font-size:11.30px;color:#000;transform:scaleX(0.935);transform-origin:0 0;">720.000 ms</div>
<div class="t" style="left:797px;top:436.00px;font-size:11.30px;color:#000;transform:scaleX(0.935);transform-origin:0 0;">720.000 ms</div>
<div class="t" style="left:805.7px;top:449.00px;font-size:11.30px;color:#000;transform:scaleX(0.935);transform-origin:0 0;">0.000 s</div>
<div class="t" style="left:885.6px;top:411.00px;font-size:11.30px;color:#000;transform:scaleX(0.935);transform-origin:0 0;">Kanal_A</div>
<div class="t" style="left:885.6px;top:424.00px;font-size:11.30px;color:#000;transform:scaleX(0.935);transform-origin:0 0;">5.000 V</div>
<div class="t" style="left:885.6px;top:436.00px;font-size:11.30px;color:#000;transform:scaleX(0.935);transform-origin:0 0;">5.000 V</div>
<div class="t" style="left:885.6px;top:449.00px;font-size:11.30px;color:#000;transform:scaleX(0.935);transform-origin:0 0;">0.000 V</div>
<div class="t" style="left:965.6px;top:411.00px;font-size:11.30px;color:#000;transform:scaleX(0.935);transform-origin:0 0;">Kanal_B</div>
<div class="t" style="left:965.6px;top:424.00px;font-size:11.30px;color:#000;transform:scaleX(0.935);transform-origin:0 0;">2.014 V</div>
<div class="t" style="left:965.6px;top:436.00px;font-size:11.30px;color:#000;transform:scaleX(0.935);transform-origin:0 0;">2.014 V</div>
<div class="t" style="left:965.6px;top:449.00px;font-size:11.30px;color:#000;transform:scaleX(0.935);transform-origin:0 0;">0.000 V</div>
<div class="a" style="left:1208px;top:415px;width:60px;height:20px;background:linear-gradient(#f2f2f2 0%,#ebebeb 45%,#dddddd 50%,#cfcfcf 100%);border:1px solid #707070;border-radius:3px;box-shadow:inset 0 0 0 1px rgba(255,255,255,.6)"></div>
<div class="t" style="left:1038.0px;width:400px;text-align:center;top:420.00px;font-size:11.30px;color:#000;font-family:"Liberation Sans",sans-serif;transform:scaleX(0.935);transform-origin:50% 0;">Invertieren</div>
<div class="a" style="left:1208px;top:442px;width:60px;height:21px;background:linear-gradient(#f2f2f2 0%,#ebebeb 45%,#dddddd 50%,#cfcfcf 100%);border:1px solid #707070;border-radius:3px;box-shadow:inset 0 0 0 1px rgba(255,255,255,.6)"></div>
<div class="t" style="left:1038.0px;width:400px;text-align:center;top:448.00px;font-size:11.30px;color:#000;font-family:"Liberation Sans",sans-serif;transform:scaleX(0.935);transform-origin:50% 0;">Speichern</div>
<div class="t" style="left:1278.5px;top:457.00px;font-size:11.30px;color:#000;transform:scaleX(0.935);transform-origin:0 0;">Erw. Trigger</div>
<div class="a" style="left:1341.4px;top:457.2px;width:12px;height:12px;border-radius:50%;border:1px solid #a0a0a0;background:radial-gradient(circle,#f8f8f8,#d8d8d8)"></div>
<div class="a" style="left:730px;top:480px;width:155px;height:71px;border:1px solid #d5dfe5;border-radius:3px;box-shadow:inset 1px 1px 0 #fff"></div>
<div class="a" style="left:733.9px;top:474px;width:63.800000000000004px;height:12px;background:#f0f0f0"></div>
<div class="t" style="left:737.9px;top:475.00px;font-size:11.30px;color:#000;transform:scaleX(0.935);transform-origin:0 0;">Zeitbasis</div>
<div class="t" style="left:731.6px;top:493.00px;font-size:11.30px;color:#000;transform:scaleX(0.935);transform-origin:0 0;">Skalierung:</div>
<div class="t" style="left:731.6px;top:513.00px;font-size:11.30px;color:#000;transform:scaleX(0.935);transform-origin:0 0;">X pos.(Div):</div>
<div class="a" style="left:793.5px;top:486px;width:86.5px;height:19px;background:#fff;border:1px solid #e3e3e3;border-top-color:#abadb3"></div>
<div class="t" style="left:799.7px;top:491.00px;font-size:11.30px;color:#000;transform:scaleX(0.935);transform-origin:0 0;">10 ms/Div</div>
<div class="a" style="left:807.5px;top:508px;width:72.5px;height:18px;background:#fff;border:1px solid #e3e3e3;border-top-color:#abadb3"></div>
<div class="t" style="left:812.6px;top:512.00px;font-size:11.30px;color:#000;transform:scaleX(0.935);transform-origin:0 0;">0</div>
<div class="a" style="left:737px;top:531px;width:24px;height:18px;background:linear-gradient(#e5f4fc 0%,#c4e5f6 45%,#98d1ef 50%,#68b3db 100%);border:1px solid #2c628b;border-radius:3px;box-shadow:inset 0 0 0 1px rgba(255,255,255,.6)"></div>
<div class="t" style="left:549.0px;width:400px;text-align:center;top:535.00px;font-size:11.30px;color:#000;font-family:"Liberation Sans",sans-serif;transform:scaleX(0.935);transform-origin:50% 0;">Y/T</div>
<div class="a" style="left:763px;top:531px;width:61px;height:18px;background:linear-gradient(#f2f2f2 0%,#ebebeb 45%,#dddddd 50%,#cfcfcf 100%);border:1px solid #707070;border-radius:3px;box-shadow:inset 0 0 0 1px rgba(255,255,255,.6)"></div>
<div class="t" style="left:593.5px;width:400px;text-align:center;top:535.00px;font-size:11.30px;color:#000;font-family:"Liberation Sans",sans-serif;transform:scaleX(0.935);transform-origin:50% 0;">Hinzufügen</div>
<div class="a" style="left:827px;top:531px;width:25px;height:18px;background:linear-gradient(#f2f2f2 0%,#ebebeb 45%,#dddddd 50%,#cfcfcf 100%);border:1px solid #707070;border-radius:3px;box-shadow:inset 0 0 0 1px rgba(255,255,255,.6)"></div>
<div class="t" style="left:639.5px;width:400px;text-align:center;top:535.00px;font-size:11.30px;color:#000;font-family:"Liberation Sans",sans-serif;transform:scaleX(0.935);transform-origin:50% 0;">B/A</div>
<div class="a" style="left:854px;top:531px;width:25px;height:18px;background:linear-gradient(#f2f2f2 0%,#ebebeb 45%,#dddddd 50%,#cfcfcf 100%);border:1px solid #707070;border-radius:3px;box-shadow:inset 0 0 0 1px rgba(255,255,255,.6)"></div>
<div class="t" style="left:666.5px;width:400px;text-align:center;top:535.00px;font-size:11.30px;color:#000;font-family:"Liberation Sans",sans-serif;transform:scaleX(0.935);transform-origin:50% 0;">A/B</div>
<div class="a" style="left:887px;top:480px;width:144px;height:71px;border:1px solid #d5dfe5;border-radius:3px;box-shadow:inset 1px 1px 0 #fff"></div>
<div class="a" style="left:890.7px;top:474px;width:51.4px;height:12px;background:#f0f0f0"></div>
<div class="t" style="left:894.7px;top:475.00px;font-size:11.30px;color:#000;transform:scaleX(0.935);transform-origin:0 0;">Kanal A</div>
<div class="t" style="left:888.5px;top:493.00px;font-size:11.30px;color:#000;transform:scaleX(0.935);transform-origin:0 0;">Skalierung:</div>
<div class="t" style="left:888.5px;top:513.00px;font-size:11.30px;color:#000;transform:scaleX(0.935);transform-origin:0 0;">Y pos.(Div):</div>
<div class="a" style="left:946.5px;top:486px;width:82.0px;height:19px;background:#fff;border:1px solid #e3e3e3;border-top-color:#abadb3"></div>
<div class="t" style="left:952.2px;top:491.00px;font-size:11.30px;color:#000;transform:scaleX(0.935);transform-origin:0 0;">5  V/Div</div>
<div class="a" style="left:960.5px;top:508px;width:68.0px;height:18px;background:#fff;border:1px solid #e3e3e3;border-top-color:#abadb3"></div>
<div class="t" style="left:965.7px;top:512.00px;font-size:11.30px;color:#000;transform:scaleX(0.935);transform-origin:0 0;">0</div>
<div class="a" style="left:890.5px;top:531px;width:27px;height:18px;background:linear-gradient(#f2f2f2 0%,#ebebeb 45%,#dddddd 50%,#cfcfcf 100%);border:1px solid #707070;border-radius:3px;box-shadow:inset 0 0 0 1px rgba(255,255,255,.6)"></div>
<div class="t" style="left:704.0px;width:400px;text-align:center;top:535.00px;font-size:11.30px;color:#000;font-family:"Liberation Sans",sans-serif;transform:scaleX(0.935);transform-origin:50% 0;">AC</div>
<div class="a" style="left:920.5px;top:531px;width:29px;height:18px;background:linear-gradient(#f2f2f2 0%,#ebebeb 45%,#dddddd 50%,#cfcfcf 100%);border:1px solid #707070;border-radius:3px;box-shadow:inset 0 0 0 1px rgba(255,255,255,.6)"></div>
<div class="t" style="left:735.0px;width:400px;text-align:center;top:535.00px;font-size:11.30px;color:#000;font-family:"Liberation Sans",sans-serif;transform:scaleX(0.935);transform-origin:50% 0;">0</div>
<div class="a" style="left:952px;top:531px;width:29px;height:18px;background:linear-gradient(#e5f4fc 0%,#c4e5f6 45%,#98d1ef 50%,#68b3db 100%);border:1px solid #2c628b;border-radius:3px;box-shadow:inset 0 0 0 1px rgba(255,255,255,.6)"></div>
<div class="t" style="left:766.5px;width:400px;text-align:center;top:535.00px;font-size:11.30px;color:#000;font-family:"Liberation Sans",sans-serif;transform:scaleX(0.935);transform-origin:50% 0;">DC</div>
<div class="a" style="left:1010.5px;top:532.7px;width:12px;height:12px;border-radius:50%;border:1px solid #a0a0a0;background:radial-gradient(circle,#f8f8f8,#d8d8d8)"></div>
<div class="a" style="left:1013.5px;top:535.7px;width:6px;height:6px;border-radius:50%;background:radial-gradient(circle at 40% 40%,#d0d0d0,#909090)"></div>
<div class="a" style="left:1033px;top:480px;width:144px;height:71px;border:1px solid #d5dfe5;border-radius:3px;box-shadow:inset 1px 1px 0 #fff"></div>
<div class="a" style="left:1037.2px;top:474px;width:51.4px;height:12px;background:#f0f0f0"></div>
<div class="t" style="left:1041.2px;top:475.00px;font-size:11.30px;color:#000;transform:scaleX(0.935);transform-origin:0 0;">Kanal B</div>
<div class="t" style="left:1034.5px;top:493.00px;font-size:11.30px;color:#000;transform:scaleX(0.935);transform-origin:0 0;">Skalierung:</div>
<div class="t" style="left:1034.5px;top:513.00px;font-size:11.30px;color:#000;transform:scaleX(0.935);transform-origin:0 0;">Y pos.(Div):</div>
<div class="a" style="left:1093.5px;top:486px;width:82.0px;height:19px;background:#fff;border:1px solid #e3e3e3;border-top-color:#abadb3"></div>
<div class="t" style="left:1098.6px;top:491.00px;font-size:11.30px;color:#000;transform:scaleX(0.935);transform-origin:0 0;">5  V/Div</div>
<div class="a" style="left:1107.5px;top:508px;width:68.0px;height:18px;background:#fff;border:1px solid #e3e3e3;border-top-color:#abadb3"></div>
<div class="t" style="left:1112.6px;top:512.00px;font-size:11.30px;color:#000;transform:scaleX(0.935);transform-origin:0 0;">0</div>
<div class="a" style="left:1036.5px;top:533px;width:27px;height:17px;background:linear-gradient(#f2f2f2 0%,#ebebeb 45%,#dddddd 50%,#cfcfcf 100%);border:1px solid #707070;border-radius:3px;box-shadow:inset 0 0 0 1px rgba(255,255,255,.6)"></div>
<div class="t" style="left:850.0px;width:400px;text-align:center;top:537.00px;font-size:11.30px;color:#000;font-family:"Liberation Sans",sans-serif;transform:scaleX(0.935);transform-origin:50% 0;">AC</div>
<div class="a" style="left:1066.5px;top:533px;width:24px;height:17px;background:linear-gradient(#f2f2f2 0%,#ebebeb 45%,#dddddd 50%,#cfcfcf 100%);border:1px solid #707070;border-radius:3px;box-shadow:inset 0 0 0 1px rgba(255,255,255,.6)"></div>
<div class="t" style="left:878.5px;width:400px;text-align:center;top:537.00px;font-size:11.30px;color:#000;font-family:"Liberation Sans",sans-serif;transform:scaleX(0.935);transform-origin:50% 0;">0</div>
<div class="a" style="left:1093.5px;top:533px;width:28px;height:17px;background:linear-gradient(#e5f4fc 0%,#c4e5f6 45%,#98d1ef 50%,#68b3db 100%);border:1px solid #2c628b;border-radius:3px;box-shadow:inset 0 0 0 1px rgba(255,255,255,.6)"></div>
<div class="t" style="left:907.5px;width:400px;text-align:center;top:537.00px;font-size:11.30px;color:#000;font-family:"Liberation Sans",sans-serif;transform:scaleX(0.935);transform-origin:50% 0;">DC</div>
<div class="a" style="left:1124.5px;top:533px;width:21px;height:17px;background:linear-gradient(#f2f2f2 0%,#ebebeb 45%,#dddddd 50%,#cfcfcf 100%);border:1px solid #707070;border-radius:3px;box-shadow:inset 0 0 0 1px rgba(255,255,255,.6)"></div>
<div class="t" style="left:935.0px;width:400px;text-align:center;top:537.00px;font-size:11.30px;color:#000;font-family:"Liberation Sans",sans-serif;transform:scaleX(0.935);transform-origin:50% 0;">-</div>
<div class="a" style="left:1162.4px;top:535.2px;width:12px;height:12px;border-radius:50%;border:1px solid #a0a0a0;background:radial-gradient(circle,#f8f8f8,#d8d8d8)"></div>
<div class="a" style="left:1165.4px;top:538.2px;width:6px;height:6px;border-radius:50%;background:radial-gradient(circle at 40% 40%,#d0d0d0,#909090)"></div>
<div class="a" style="left:1180px;top:480px;width:191px;height:71px;border:1px solid #d5dfe5;border-radius:3px;box-shadow:inset 1px 1px 0 #fff"></div>
<div class="a" style="left:1184px;top:474px;width:51.4px;height:12px;background:#f0f0f0"></div>
<div class="t" style="left:1188px;top:475.00px;font-size:11.30px;color:#000;transform:scaleX(0.935);transform-origin:0 0;">Trigger</div>
<div class="t" style="left:1182.5px;top:493.00px;font-size:11.30px;color:#000;transform:scaleX(0.935);transform-origin:0 0;">Signalflanke:</div>
<div class="t" style="left:1182.5px;top:513.00px;font-size:11.30px;color:#000;transform:scaleX(0.935);transform-origin:0 0;">Pegel:</div>
<div class="a" style="left:1259px;top:491px;width:16px;height:17px;background:linear-gradient(#e5f4fc 0%,#c4e5f6 45%,#98d1ef 50%,#68b3db 100%);border:1px solid #2c628b;border-radius:3px;box-shadow:inset 0 0 0 1px rgba(255,255,255,.6)"></div>
<svg class="a" style="left:1262px;top:494px;" width="10" height="10" viewBox="0 0 10 10"><path d="M0 9H4V1H9" fill="none" stroke="#000" stroke-width="1.2"/><path d="M2 6L6 4" stroke="#000"/></svg>
<div class="a" style="left:1277px;top:491px;width:16px;height:17px;background:linear-gradient(#f2f2f2 0%,#ebebeb 45%,#dddddd 50%,#cfcfcf 100%);border:1px solid #707070;border-radius:3px;box-shadow:inset 0 0 0 1px rgba(255,255,255,.6)"></div>
<svg class="a" style="left:1280px;top:494px;" width="10" height="10" viewBox="0 0 10 10"><path d="M0 1H4V9H9" fill="none" stroke="#000" stroke-width="1.2"/><path d="M2 4L6 6" stroke="#000"/></svg>
<div class="a" style="left:1298px;top:491px;width:18px;height:17px;background:linear-gradient(#e5f4fc 0%,#c4e5f6 45%,#98d1ef 50%,#68b3db 100%);border:1px solid #2c628b;border-radius:3px;box-shadow:inset 0 0 0 1px rgba(255,255,255,.6)"></div>
<div class="t" style="left:1107.0px;width:400px;text-align:center;top:495.00px;font-size:11.30px;color:#000;font-family:"Liberation Sans",sans-serif;transform:scaleX(0.935);transform-origin:50% 0;">A</div>
<div class="a" style="left:1319px;top:491px;width:15px;height:17px;background:#f4f4f4;border:1px solid #adb2b5;border-radius:3px;box-shadow:inset 0 0 0 1px rgba(255,255,255,.6)"></div>
<div class="t" style="left:1126.5px;width:400px;text-align:center;top:495.00px;font-size:11.30px;color:#838383;font-family:"Liberation Sans",sans-serif;transform:scaleX(0.935);transform-origin:50% 0;">B</div>
<div class="a" style="left:1337px;top:491px;width:30px;height:17px;background:#f4f4f4;border:1px solid #adb2b5;border-radius:3px;box-shadow:inset 0 0 0 1px rgba(255,255,255,.6)"></div>
<div class="t" style="left:1152.0px;width:400px;text-align:center;top:495.00px;font-size:11.30px;color:#838383;font-family:"Liberation Sans",sans-serif;transform:scaleX(0.935);transform-origin:50% 0;">ERW</div>
<div class="a" style="left:1258.5px;top:511.5px;width:78.5px;height:17.5px;background:#fff;border:1px solid #e3e3e3;border-top-color:#abadb3"></div>
<div class="t" style="left:1263.8px;top:516.00px;font-size:11.30px;color:#000;transform:scaleX(0.935);transform-origin:0 0;">0</div>
<div class="a" style="left:1338.5px;top:511.5px;width:28.5px;height:17.5px;background:#fff;border:1px solid #e3e3e3;border-top-color:#abadb3"></div>
<div class="t" style="left:1345.8px;top:516.00px;font-size:11.30px;color:#000;transform:scaleX(0.935);transform-origin:0 0;">V</div>
<div class="a" style="left:1184px;top:532px;width:37px;height:17px;background:linear-gradient(#f2f2f2 0%,#ebebeb 45%,#dddddd 50%,#cfcfcf 100%);border:1px solid #707070;border-radius:3px;box-shadow:inset 0 0 0 1px rgba(255,255,255,.6)"></div>
<div class="t" style="left:1002.5px;width:400px;text-align:center;top:535.00px;font-size:11.30px;color:#000;font-family:"Liberation Sans",sans-serif;transform:scaleX(0.935);transform-origin:50% 0;">Einmal</div>
<div class="a" style="left:1223px;top:532px;width:42px;height:17px;background:linear-gradient(#f2f2f2 0%,#ebebeb 45%,#dddddd 50%,#cfcfcf 100%);border:1px solid #707070;border-radius:3px;box-shadow:inset 0 0 0 1px rgba(255,255,255,.6)"></div>
<div class="t" style="left:1044.0px;width:400px;text-align:center;top:535.00px;font-size:11.30px;color:#000;font-family:"Liberation Sans",sans-serif;transform:scaleX(0.935);transform-origin:50% 0;">Normal</div>
<div class="a" style="left:1267px;top:532px;width:65px;height:17px;background:linear-gradient(#f2f2f2 0%,#ebebeb 45%,#dddddd 50%,#cfcfcf 100%);border:1px solid #707070;border-radius:3px;box-shadow:inset 0 0 0 1px rgba(255,255,255,.6)"></div>
<div class="t" style="left:1099.5px;width:400px;text-align:center;top:535.00px;font-size:11.30px;color:#000;font-family:"Liberation Sans",sans-serif;transform:scaleX(0.935);transform-origin:50% 0;">Automatisch</div>
<div class="a" style="left:1334px;top:532px;width:33px;height:17px;background:linear-gradient(#e5f4fc 0%,#c4e5f6 45%,#98d1ef 50%,#68b3db 100%);border:1px solid #2c628b;border-radius:3px;box-shadow:inset 0 0 0 1px rgba(255,255,255,.6)"></div>
<div class="t" style="left:1150.5px;width:400px;text-align:center;top:535.00px;font-size:11.30px;color:#000;font-family:"Liberation Sans",sans-serif;transform:scaleX(0.935);transform-origin:50% 0;">Kein</div>

</body></html>
